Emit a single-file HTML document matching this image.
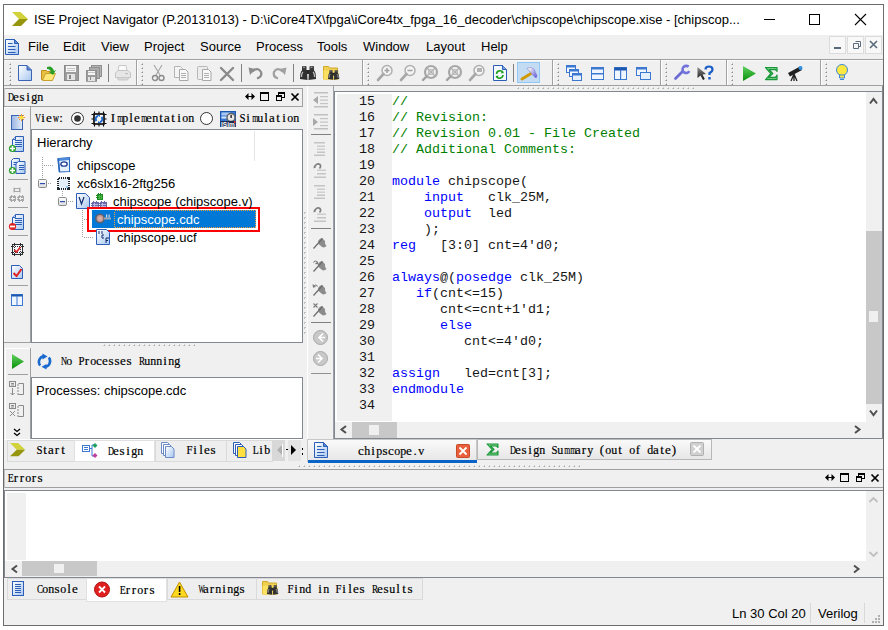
<!DOCTYPE html>
<html><head><meta charset="utf-8">
<style>
*{margin:0;padding:0;box-sizing:border-box}
body{width:888px;height:630px;background:#fff;position:relative;overflow:hidden;font-family:"Liberation Sans",sans-serif;font-size:13px;color:#000}
svg{position:absolute;left:0;top:0}
.t{position:absolute;white-space:pre}
.ui{font-family:"Liberation Sans",sans-serif;font-size:13px;line-height:16px}
.ss{font-family:"Liberation Serif",serif;font-size:13px;line-height:14px;-webkit-text-stroke:0.2px #000}
.ss i{font-style:normal;display:inline-block;width:6px;text-align:center}
.code{font-family:"Liberation Mono",monospace;font-size:13.33px;line-height:16px;color:#161616}
.kw{color:#0000ff}
.cm{color:#008000}
</style></head><body>
<svg width="888" height="630" viewBox="0 0 888 630" shape-rendering="auto"><defs>
<linearGradient id="gdoc" x1="0" y1="0" x2="1" y2="1"><stop offset="0" stop-color="#ffffff"/><stop offset="1" stop-color="#a8c8f0"/></linearGradient>
<linearGradient id="gexp" x1="0" y1="0" x2="0" y2="1"><stop offset="0" stop-color="#ffffff"/><stop offset="1" stop-color="#dcdcdc"/></linearGradient><linearGradient id="gtab" x1="0" y1="0" x2="0" y2="1"><stop offset="0" stop-color="#fafafa"/><stop offset="1" stop-color="#e6e6e6"/></linearGradient></defs>
<rect x="0" y="0" width="888" height="630" fill="#fff" />
<rect x="3" y="4" width="881" height="622" fill="#6c6c6c" />
<rect x="4" y="5" width="879" height="620" fill="#f0f0f0" />
<rect x="4" y="5" width="879" height="30" fill="#fff" />
<g transform="translate(12,12) scale(1.0)"><polygon points="0,0 8.5,0 16,7 7,7" fill="#d2d23c"/><polygon points="7,7 16,7 9,14 0,14" fill="#96960c"/></g>
<rect x="764" y="19" width="11" height="1" fill="#000" />
<rect x="809.5" y="14.5" width="10" height="10" fill="none" stroke="#000" stroke-width="1"/>
<path d="M855,14 L866,25 M866,14 L855,25" stroke="#000" stroke-width="1.1"/>
<g transform="translate(5,39)"><path d="M0.5,0.5 H9.5 L13.5,4.5 V15.5 H0.5 Z" fill="url(#gdoc)" stroke="#2c5eb8"/><path d="M9.5,0.5 V4.5 H13.5 Z" fill="#5a8ad8" stroke="#2c5eb8"/><path d="M3,4.5 H7.5 M3,7.5 H10.5 M3,10.5 H10.5 M3,13.5 H10.5" stroke="#2c5eb8" stroke-width="1.2"/></g>
<rect x="829" y="36" width="17" height="18" fill="#f8f8f8" />
<rect x="829" y="36" width="17" height="1" fill="#dcdcdc" />
<rect x="829" y="53" width="17" height="1" fill="#dcdcdc" />
<rect x="829" y="36" width="1" height="18" fill="#dcdcdc" />
<rect x="845" y="36" width="1" height="18" fill="#dcdcdc" />
<rect x="847" y="36" width="17" height="18" fill="#f8f8f8" />
<rect x="847" y="36" width="17" height="1" fill="#dcdcdc" />
<rect x="847" y="53" width="17" height="1" fill="#dcdcdc" />
<rect x="847" y="36" width="1" height="18" fill="#dcdcdc" />
<rect x="863" y="36" width="1" height="18" fill="#dcdcdc" />
<rect x="865" y="36" width="17" height="18" fill="#f8f8f8" />
<rect x="865" y="36" width="17" height="1" fill="#dcdcdc" />
<rect x="865" y="53" width="17" height="1" fill="#dcdcdc" />
<rect x="865" y="36" width="1" height="18" fill="#dcdcdc" />
<rect x="881" y="36" width="1" height="18" fill="#dcdcdc" />
<rect x="834" y="47" width="7" height="2" fill="#5a6a7a"/>
<path d="M853.5,43.5 h5 v5 h-5 z M855.5,41.5 h5 v5 h-2" fill="none" stroke="#5a6a7a"/>
<path d="M870,41 l7,7 M877,41 l-7,7" stroke="#5a6a7a" stroke-width="1.6"/>
<rect x="4" y="59" width="879" height="1" fill="#a0a0a0" />
<rect x="4" y="85" width="879" height="1" fill="#a0a0a0" />
<rect x="5" y="60" width="878" height="1" fill="#fafafa" />
<rect x="136" y="60" width="1" height="25" fill="#a0a0a0" />
<rect x="137" y="60" width="1" height="25" fill="#fff" />
<rect x="362" y="60" width="1" height="25" fill="#a0a0a0" />
<rect x="363" y="60" width="1" height="25" fill="#fff" />
<rect x="552" y="60" width="1" height="25" fill="#a0a0a0" />
<rect x="553" y="60" width="1" height="25" fill="#fff" />
<rect x="660" y="60" width="1" height="25" fill="#a0a0a0" />
<rect x="661" y="60" width="1" height="25" fill="#fff" />
<rect x="726" y="60" width="1" height="25" fill="#a0a0a0" />
<rect x="727" y="60" width="1" height="25" fill="#fff" />
<rect x="820" y="60" width="1" height="25" fill="#a0a0a0" />
<rect x="821" y="60" width="1" height="25" fill="#fff" />
<rect x="9" y="63" width="2" height="2" fill="#c4c4c4" />
<rect x="9" y="63" width="1" height="1" fill="#fafafa" />
<rect x="10" y="64" width="1" height="1" fill="#8c8c8c" />
<rect x="9" y="67" width="2" height="2" fill="#c4c4c4" />
<rect x="9" y="67" width="1" height="1" fill="#fafafa" />
<rect x="10" y="68" width="1" height="1" fill="#8c8c8c" />
<rect x="9" y="71" width="2" height="2" fill="#c4c4c4" />
<rect x="9" y="71" width="1" height="1" fill="#fafafa" />
<rect x="10" y="72" width="1" height="1" fill="#8c8c8c" />
<rect x="9" y="75" width="2" height="2" fill="#c4c4c4" />
<rect x="9" y="75" width="1" height="1" fill="#fafafa" />
<rect x="10" y="76" width="1" height="1" fill="#8c8c8c" />
<rect x="9" y="79" width="2" height="2" fill="#c4c4c4" />
<rect x="9" y="79" width="1" height="1" fill="#fafafa" />
<rect x="10" y="80" width="1" height="1" fill="#8c8c8c" />
<rect x="9" y="83" width="2" height="2" fill="#c4c4c4" />
<rect x="9" y="83" width="1" height="1" fill="#fafafa" />
<rect x="10" y="84" width="1" height="1" fill="#8c8c8c" />
<rect x="141" y="63" width="2" height="2" fill="#c4c4c4" />
<rect x="141" y="63" width="1" height="1" fill="#fafafa" />
<rect x="142" y="64" width="1" height="1" fill="#8c8c8c" />
<rect x="141" y="67" width="2" height="2" fill="#c4c4c4" />
<rect x="141" y="67" width="1" height="1" fill="#fafafa" />
<rect x="142" y="68" width="1" height="1" fill="#8c8c8c" />
<rect x="141" y="71" width="2" height="2" fill="#c4c4c4" />
<rect x="141" y="71" width="1" height="1" fill="#fafafa" />
<rect x="142" y="72" width="1" height="1" fill="#8c8c8c" />
<rect x="141" y="75" width="2" height="2" fill="#c4c4c4" />
<rect x="141" y="75" width="1" height="1" fill="#fafafa" />
<rect x="142" y="76" width="1" height="1" fill="#8c8c8c" />
<rect x="141" y="79" width="2" height="2" fill="#c4c4c4" />
<rect x="141" y="79" width="1" height="1" fill="#fafafa" />
<rect x="142" y="80" width="1" height="1" fill="#8c8c8c" />
<rect x="141" y="83" width="2" height="2" fill="#c4c4c4" />
<rect x="141" y="83" width="1" height="1" fill="#fafafa" />
<rect x="142" y="84" width="1" height="1" fill="#8c8c8c" />
<rect x="367" y="63" width="2" height="2" fill="#c4c4c4" />
<rect x="367" y="63" width="1" height="1" fill="#fafafa" />
<rect x="368" y="64" width="1" height="1" fill="#8c8c8c" />
<rect x="367" y="67" width="2" height="2" fill="#c4c4c4" />
<rect x="367" y="67" width="1" height="1" fill="#fafafa" />
<rect x="368" y="68" width="1" height="1" fill="#8c8c8c" />
<rect x="367" y="71" width="2" height="2" fill="#c4c4c4" />
<rect x="367" y="71" width="1" height="1" fill="#fafafa" />
<rect x="368" y="72" width="1" height="1" fill="#8c8c8c" />
<rect x="367" y="75" width="2" height="2" fill="#c4c4c4" />
<rect x="367" y="75" width="1" height="1" fill="#fafafa" />
<rect x="368" y="76" width="1" height="1" fill="#8c8c8c" />
<rect x="367" y="79" width="2" height="2" fill="#c4c4c4" />
<rect x="367" y="79" width="1" height="1" fill="#fafafa" />
<rect x="368" y="80" width="1" height="1" fill="#8c8c8c" />
<rect x="367" y="83" width="2" height="2" fill="#c4c4c4" />
<rect x="367" y="83" width="1" height="1" fill="#fafafa" />
<rect x="368" y="84" width="1" height="1" fill="#8c8c8c" />
<rect x="557" y="63" width="2" height="2" fill="#c4c4c4" />
<rect x="557" y="63" width="1" height="1" fill="#fafafa" />
<rect x="558" y="64" width="1" height="1" fill="#8c8c8c" />
<rect x="557" y="67" width="2" height="2" fill="#c4c4c4" />
<rect x="557" y="67" width="1" height="1" fill="#fafafa" />
<rect x="558" y="68" width="1" height="1" fill="#8c8c8c" />
<rect x="557" y="71" width="2" height="2" fill="#c4c4c4" />
<rect x="557" y="71" width="1" height="1" fill="#fafafa" />
<rect x="558" y="72" width="1" height="1" fill="#8c8c8c" />
<rect x="557" y="75" width="2" height="2" fill="#c4c4c4" />
<rect x="557" y="75" width="1" height="1" fill="#fafafa" />
<rect x="558" y="76" width="1" height="1" fill="#8c8c8c" />
<rect x="557" y="79" width="2" height="2" fill="#c4c4c4" />
<rect x="557" y="79" width="1" height="1" fill="#fafafa" />
<rect x="558" y="80" width="1" height="1" fill="#8c8c8c" />
<rect x="557" y="83" width="2" height="2" fill="#c4c4c4" />
<rect x="557" y="83" width="1" height="1" fill="#fafafa" />
<rect x="558" y="84" width="1" height="1" fill="#8c8c8c" />
<rect x="665" y="63" width="2" height="2" fill="#c4c4c4" />
<rect x="665" y="63" width="1" height="1" fill="#fafafa" />
<rect x="666" y="64" width="1" height="1" fill="#8c8c8c" />
<rect x="665" y="67" width="2" height="2" fill="#c4c4c4" />
<rect x="665" y="67" width="1" height="1" fill="#fafafa" />
<rect x="666" y="68" width="1" height="1" fill="#8c8c8c" />
<rect x="665" y="71" width="2" height="2" fill="#c4c4c4" />
<rect x="665" y="71" width="1" height="1" fill="#fafafa" />
<rect x="666" y="72" width="1" height="1" fill="#8c8c8c" />
<rect x="665" y="75" width="2" height="2" fill="#c4c4c4" />
<rect x="665" y="75" width="1" height="1" fill="#fafafa" />
<rect x="666" y="76" width="1" height="1" fill="#8c8c8c" />
<rect x="665" y="79" width="2" height="2" fill="#c4c4c4" />
<rect x="665" y="79" width="1" height="1" fill="#fafafa" />
<rect x="666" y="80" width="1" height="1" fill="#8c8c8c" />
<rect x="665" y="83" width="2" height="2" fill="#c4c4c4" />
<rect x="665" y="83" width="1" height="1" fill="#fafafa" />
<rect x="666" y="84" width="1" height="1" fill="#8c8c8c" />
<rect x="731" y="63" width="2" height="2" fill="#c4c4c4" />
<rect x="731" y="63" width="1" height="1" fill="#fafafa" />
<rect x="732" y="64" width="1" height="1" fill="#8c8c8c" />
<rect x="731" y="67" width="2" height="2" fill="#c4c4c4" />
<rect x="731" y="67" width="1" height="1" fill="#fafafa" />
<rect x="732" y="68" width="1" height="1" fill="#8c8c8c" />
<rect x="731" y="71" width="2" height="2" fill="#c4c4c4" />
<rect x="731" y="71" width="1" height="1" fill="#fafafa" />
<rect x="732" y="72" width="1" height="1" fill="#8c8c8c" />
<rect x="731" y="75" width="2" height="2" fill="#c4c4c4" />
<rect x="731" y="75" width="1" height="1" fill="#fafafa" />
<rect x="732" y="76" width="1" height="1" fill="#8c8c8c" />
<rect x="731" y="79" width="2" height="2" fill="#c4c4c4" />
<rect x="731" y="79" width="1" height="1" fill="#fafafa" />
<rect x="732" y="80" width="1" height="1" fill="#8c8c8c" />
<rect x="731" y="83" width="2" height="2" fill="#c4c4c4" />
<rect x="731" y="83" width="1" height="1" fill="#fafafa" />
<rect x="732" y="84" width="1" height="1" fill="#8c8c8c" />
<rect x="825" y="63" width="2" height="2" fill="#c4c4c4" />
<rect x="825" y="63" width="1" height="1" fill="#fafafa" />
<rect x="826" y="64" width="1" height="1" fill="#8c8c8c" />
<rect x="825" y="67" width="2" height="2" fill="#c4c4c4" />
<rect x="825" y="67" width="1" height="1" fill="#fafafa" />
<rect x="826" y="68" width="1" height="1" fill="#8c8c8c" />
<rect x="825" y="71" width="2" height="2" fill="#c4c4c4" />
<rect x="825" y="71" width="1" height="1" fill="#fafafa" />
<rect x="826" y="72" width="1" height="1" fill="#8c8c8c" />
<rect x="825" y="75" width="2" height="2" fill="#c4c4c4" />
<rect x="825" y="75" width="1" height="1" fill="#fafafa" />
<rect x="826" y="76" width="1" height="1" fill="#8c8c8c" />
<rect x="825" y="79" width="2" height="2" fill="#c4c4c4" />
<rect x="825" y="79" width="1" height="1" fill="#fafafa" />
<rect x="826" y="80" width="1" height="1" fill="#8c8c8c" />
<rect x="825" y="83" width="2" height="2" fill="#c4c4c4" />
<rect x="825" y="83" width="1" height="1" fill="#fafafa" />
<rect x="826" y="84" width="1" height="1" fill="#8c8c8c" />
<rect x="108" y="64" width="1" height="18" fill="#808080" />
<rect x="241" y="64" width="1" height="18" fill="#808080" />
<rect x="293" y="64" width="1" height="18" fill="#808080" />
<rect x="513" y="64" width="1" height="18" fill="#808080" />
<g transform="translate(18,65)"><path d="M0.5,0.5 H9 L13.5,5 V15.5 H0.5 Z" fill="url(#gdoc)" stroke="#3c64b4"/><path d="M9,0.5 V5 H13.5" fill="#5a82d2" stroke="#3c64b4"/></g>
<g transform="translate(41,65)"><path d="M0.5,5.5 h5 l1,1 h5 v8 h-11 z" fill="#e8c040" stroke="#c09020"/><path d="M1.5,15.5 l3,-7 h10 l-3,7 z" fill="#ffe878" stroke="#c8a030"/><path d="M6,2 q5,-2 7,4 l2,-1 -3,5 -4,-3 2,0 q-1,-3 -4,-3z" fill="#28a028"/></g>
<g transform="translate(64,65)" shape-rendering="crispEdges"><rect x="0" y="0" width="14" height="15" fill="#9c9c9c"/><rect x="0" y="0" width="14" height="15" fill="none" stroke="#8a8a8a"/><rect x="2" y="1" width="10" height="6" fill="#f6f6f6"/><rect x="3" y="3" width="8" height="1" fill="#c4c4c4"/><rect x="3" y="5" width="8" height="1" fill="#c4c4c4"/><rect x="3" y="9" width="8" height="6" fill="#e4e4e4"/><rect x="5" y="10" width="2" height="4" fill="#8a8a8a"/></g>
<g transform="translate(86,65)" shape-rendering="crispEdges"><rect x="5" y="0" width="10" height="11" fill="#b4b4b4" stroke="#909090"/><rect x="3" y="2" width="10" height="11" fill="#acacac" stroke="#909090"/></g>
<g transform="translate(86,70) scale(0.78,0.74)"><g transform="translate(0,0)" shape-rendering="crispEdges"><rect x="0" y="0" width="14" height="15" fill="#9c9c9c"/><rect x="0" y="0" width="14" height="15" fill="none" stroke="#8a8a8a"/><rect x="2" y="1" width="10" height="6" fill="#f6f6f6"/><rect x="3" y="3" width="8" height="1" fill="#c4c4c4"/><rect x="3" y="5" width="8" height="1" fill="#c4c4c4"/><rect x="3" y="9" width="8" height="6" fill="#e4e4e4"/><rect x="5" y="10" width="2" height="4" fill="#8a8a8a"/></g></g>
<g transform="translate(115,65)"><path d="M4,0.5 h7 l1,5.5 h-9 z" fill="#fafafa" stroke="#c8c8c8"/><path d="M0.5,8 l2.5,-2.5 h10 l2.5,2.5 v4.5 h-15 z" fill="#e6e6e6" stroke="#c4c4c4"/><path d="M2,12.5 h12 l-1.5,2.5 h-9 z" fill="#d8d8d8" stroke="#c8c8c8"/><rect x="10" y="8" width="3" height="1.2" fill="#c0c0c0"/></g>
<g transform="translate(152,65)" fill="none" stroke="#8c8c8c"><path d="M2,0 L8,10 M10,0 L4,10" stroke="#a8a8a8" stroke-width="1.2"/><circle cx="3" cy="13" r="2.5" stroke-width="1.4"/><circle cx="9.5" cy="13" r="2.5" stroke-width="1.4"/></g>
<g transform="translate(174,66)"><path d="M0.5,0.5 h6 l2,2 v9 h-8z" fill="#f4f4f4" stroke="#b4b4b4"/><path d="M5.5,3.5 h6 l2.5,2.5 v8.5 h-8.5z" fill="#f8f8f8" stroke="#a8a8a8"/><path d="M7,7.5 h5 M7,9.5 h5 M7,11.5 h5" stroke="#b0b0b0"/></g>
<g transform="translate(197,65)"><rect x="0.5" y="1.5" width="10" height="13" rx="1" fill="#ececec" stroke="#b8b8b8"/><path d="M5.5,4.5 h6 l2.5,2.5 v8.5 h-8.5z" fill="#f8f8f8" stroke="#a8a8a8"/><path d="M7,8.5 h5 M7,10.5 h5 M7,12.5 h5" stroke="#b0b0b0"/></g>
<path d="M221,68 L233,80 M233,68 L221,80" stroke="#8a8a8a" stroke-width="2.4" stroke-linecap="round"/>
<path d="M252,71.5 Q258,66.5 261,72 Q262.5,76.5 257,78.5" fill="none" stroke="#8c8c8c" stroke-width="2.3"/><path d="M248.5,67.5 L255.5,69 L250,75 Z" fill="#8c8c8c"/>
<path d="M283,71.5 Q277,66.5 274,72 Q272.5,76.5 278,78.5" fill="none" stroke="#a0a0a0" stroke-width="2.3"/><path d="M286.5,67.5 L279.5,69 L285,75 Z" fill="#a0a0a0"/>
<g transform="translate(300,66) scale(1.0)"><rect x="2" y="0" width="4.5" height="7" rx="1" fill="#3a3a3a"/><rect x="9.5" y="0" width="4.5" height="7" rx="1" fill="#3a3a3a"/><rect x="5" y="4" width="6" height="4" fill="#2a2a2a"/><path d="M0,13 Q0,5 2.5,4 H7 L7.5,14 Z M16,13 Q16,5 13.5,4 H9 L8.5,14 Z" fill="#303030"/><path d="M1.5,11 Q1.5,7 3,6 M14.5,11 Q14.5,7 13,6" stroke="#c0c0c0" stroke-width="1.2" fill="none"/><rect x="3" y="0.5" width="2" height="1.5" fill="#909090"/><rect x="10.5" y="0.5" width="2" height="1.5" fill="#909090"/></g>
<g transform="translate(323,65)"><path d="M0.5,1.5 h5 l1,1.5 h8 v11 h-14z" fill="#f0d050" stroke="#d0a828"/><path d="M0.5,5.5 h15 v9 h-15z" fill="#fce060"/></g>
<g transform="translate(328,70) scale(0.7)"><rect x="2" y="0" width="4.5" height="7" rx="1" fill="#3a3a3a"/><rect x="9.5" y="0" width="4.5" height="7" rx="1" fill="#3a3a3a"/><rect x="5" y="4" width="6" height="4" fill="#2a2a2a"/><path d="M0,13 Q0,5 2.5,4 H7 L7.5,14 Z M16,13 Q16,5 13.5,4 H9 L8.5,14 Z" fill="#303030"/><path d="M1.5,11 Q1.5,7 3,6 M14.5,11 Q14.5,7 13,6" stroke="#c0c0c0" stroke-width="1.2" fill="none"/><rect x="3" y="0.5" width="2" height="1.5" fill="#909090"/><rect x="10.5" y="0.5" width="2" height="1.5" fill="#909090"/></g>
<g transform="translate(377,65)"><circle cx="10" cy="5.5" r="5" fill="#f4f4f4" stroke="#b0b0b0" stroke-width="1.5"/><path d="M6.5,9 L1,15" stroke="#a8a8a8" stroke-width="2.6" stroke-linecap="round"/><path d="M7.5,5.5 h5 M10,3 v5" stroke="#a0a0a0" stroke-width="1.5"/></g>
<g transform="translate(400,65)"><circle cx="10" cy="5.5" r="5" fill="#f4f4f4" stroke="#b0b0b0" stroke-width="1.5"/><path d="M6.5,9 L1,15" stroke="#a8a8a8" stroke-width="2.6" stroke-linecap="round"/><path d="M7.5,5.5 h5" stroke="#a0a0a0" stroke-width="1.5"/></g>
<g transform="translate(422,65)"><circle cx="9" cy="7" r="6" fill="none" stroke="#a8a8a8" stroke-width="2.2"/><circle cx="9" cy="7" r="2.5" fill="#f4f4f4" stroke="#b4b4b4"/><path d="M5,3 l8,8 M13,3 l-8,8" stroke="#b0b0b0" stroke-width="1.2"/><path d="M4,12 L1,15" stroke="#a0a0a0" stroke-width="2.4" stroke-linecap="round"/></g>
<g transform="translate(446,65)"><circle cx="9" cy="7" r="6" fill="none" stroke="#a8a8a8" stroke-width="2.2"/><circle cx="9" cy="7" r="2.5" fill="#f4f4f4" stroke="#b4b4b4"/><path d="M5,3 l8,8 M13,3 l-8,8" stroke="#b0b0b0" stroke-width="1.2"/><path d="M4,12 L1,15" stroke="#a0a0a0" stroke-width="2.4" stroke-linecap="round"/></g>
<g transform="translate(469,65)"><circle cx="10" cy="5.5" r="5" fill="#f4f4f4" stroke="#b0b0b0" stroke-width="1.5"/><path d="M6.5,9 L1,15" stroke="#a8a8a8" stroke-width="2.6" stroke-linecap="round"/><rect x="8" y="3" width="5" height="4" fill="#b4b4b4"/></g>
<g transform="translate(493,65)"><path d="M0.5,0.5 h9 l4,4 v11 h-13z" fill="#f4f8ff" stroke="#2c5eb8"/><path d="M9.5,0.5 v4 h4" fill="#7ea0e0" stroke="#2c5eb8"/><path d="M3.5,9 a3.5,3.5 0 0 1 6.5,-1.5 M10,10 a3.5,3.5 0 0 1 -6.5,1.5" fill="none" stroke="#20a020" stroke-width="1.6"/><path d="M9,5.5 l2,2.5 l-3,0.5z M4.5,13.5 l-2,-2.5 l3,-0.5z" fill="#20a020"/></g>
<rect x="517.5" y="62.5" width="22" height="20" fill="#c4dcf2" stroke="#90c8f8"/>
<defs><linearGradient id="ghead" x1="0" y1="0" x2="1" y2="1"><stop offset="0.2" stop-color="#eeeeee"/><stop offset="1" stop-color="#5a50d8"/></linearGradient></defs>
<path d="M522,79 L531,73.5" stroke="#d09a00" stroke-width="3" stroke-linecap="round"/>
<path d="M527,68.2 Q530.5,66.2 534,69 L537,75.5 Q537.2,78.3 535,77.5 L530.5,72.5 Q528.5,70.5 527,68.2 Z" fill="url(#ghead)" stroke="#8080e0" stroke-width="0.6"/>
<g transform="translate(566,65)"><rect x="0.5" y="0.5" width="9" height="7" fill="#f0f6ff" stroke="#3c78d0"/><rect x="0.5" y="0.5" width="9" height="2" fill="#3c78d0"/><rect x="3.5" y="4.5" width="9" height="7" fill="#f0f6ff" stroke="#3c78d0"/><rect x="3.5" y="4.5" width="9" height="2" fill="#3c78d0"/><rect x="6.5" y="8.5" width="9" height="7" fill="#e4efff" stroke="#3c78d0"/><rect x="6.5" y="8.5" width="9" height="2" fill="#3c78d0"/></g>
<g transform="translate(591,67)"><rect x="0.5" y="0.5" width="12" height="12" fill="#f0f6ff" stroke="#3c78d0"/><rect x="0.5" y="0.5" width="12" height="2" fill="#3c78d0"/><rect x="0.5" y="6" width="12" height="1.5" fill="#3c78d0"/></g>
<g transform="translate(614,67)"><rect x="0.5" y="0.5" width="12" height="12" fill="#f0f6ff" stroke="#3c78d0"/><rect x="0.5" y="0.5" width="12" height="3" fill="#1c58b0"/><rect x="6" y="3" width="1.2" height="9" fill="#3c78d0"/></g>
<g transform="translate(636,67)"><rect x="0.5" y="0.5" width="10" height="8" fill="#f0f6ff" stroke="#3c78d0"/><rect x="0.5" y="0.5" width="10" height="2" fill="#3c78d0"/><rect x="4.5" y="5.5" width="10" height="7" fill="#e4efff" stroke="#3c78d0"/></g>
<path d="M675.5,78.5 L682.5,71.5" stroke="#6c6cd4" stroke-width="2.8" stroke-linecap="round"/><path d="M688.6,66.8 A3.6,3.6 0 1 0 689.3,71.2" fill="none" stroke="#7272dc" stroke-width="2.6"/>
<defs><linearGradient id="garr" x1="0" y1="0" x2="0" y2="1"><stop offset="0" stop-color="#909090"/><stop offset="1" stop-color="#101010"/></linearGradient></defs>
<path d="M697.5,67 L697.5,78 L700.5,75.5 L703,80 L704.8,79 L702.5,74.5 L706,74 Z" fill="url(#garr)"/>
<path d="M705.5,69.5 Q705.5,66.5 709,66.5 Q712.5,66.5 712.5,69.5 Q712.5,71.5 709.5,73 V75" fill="none" stroke="#1a5ec8" stroke-width="2.2"/><rect x="708.3" y="77" width="2.4" height="2.5" fill="#1a5ec8"/>
<path d="M743,66 L756,73.5 L743,81 Z" fill="url(#grun)"/>
<polygon transform="translate(765.5,67.5) scale(1.05,1.1)" points="0,0 11,0 11,3.5 9.5,2 3.5,2 7,5.5 3,9 9.5,9 11,7 11,11 0,11 5,5.5" fill="#70c880" stroke="#189838" stroke-width="1.1" stroke-linejoin="round"/>
<g transform="translate(786,65)"><path d="M2,8 L14,1.5 L16,5 L4,11.5z" fill="#202020"/><circle cx="14.5" cy="3" r="2" fill="#3090e0"/><path d="M8,9 L5,16 M8,9 L11,16 M8,9 V16" stroke="#202020" stroke-width="1.3"/></g>
<g transform="translate(836,64)"><circle cx="6" cy="6" r="5.5" fill="#ffe840" stroke="#3a8ad8"/><path d="M3.5,11 h5 v3 h-5z" fill="#ffe840" stroke="#3a8ad8"/><path d="M4,15.5 h4" stroke="#3a8ad8"/></g>
<rect x="4" y="88" width="299" height="1" fill="#a0a0a0" />
<rect x="4" y="88" width="1" height="19" fill="#c8c8c8" />
<rect x="4" y="106" width="299" height="1" fill="#a0a0a0" />
<rect x="302" y="88" width="1" height="19" fill="#a0a0a0" />
<g transform="translate(0,0)"><path d="M246,96.5 H254" stroke="#000" stroke-width="1"/><path d="M245,96.5 L248.5,93 V100 Z M255,96.5 L251.5,93 V100 Z" fill="#000"/><rect x="260.5" y="92.5" width="8" height="8" fill="none" stroke="#000" shape-rendering="crispEdges"/><rect x="260" y="92" width="9" height="2" fill="#000"/><rect x="276.5" y="95.5" width="5" height="5" fill="none" stroke="#000" shape-rendering="crispEdges"/><rect x="276" y="95" width="6" height="2" fill="#000"/><path d="M278.5,95 V92.5 H284.5 V97.5 H282" fill="none" stroke="#000" shape-rendering="crispEdges"/><rect x="278" y="92" width="7" height="2" fill="#000"/><path d="M291.5,93.5 L298.5,100.5 M298.5,93.5 L291.5,100.5" stroke="#000" stroke-width="1.7"/></g>
<rect x="4" y="107" width="1" height="235" fill="#fafafa" />
<rect x="5" y="107" width="25" height="1" fill="#fff" />
<rect x="4" y="342" width="27" height="1" fill="#a0a0a0" />
<rect x="5" y="348" width="25" height="1" fill="#fff" />
<rect x="5" y="348" width="1" height="91" fill="#fff" />
<rect x="30" y="107" width="1" height="236" fill="#a0a0a0" />
<rect x="30" y="348" width="1" height="91" fill="#a0a0a0" />
<rect x="8" y="179" width="20" height="1" fill="#a0a0a0" />
<rect x="8" y="207" width="20" height="1" fill="#a0a0a0" />
<rect x="8" y="235" width="20" height="1" fill="#a0a0a0" />
<rect x="8" y="285" width="20" height="1" fill="#a0a0a0" />
<rect x="8" y="374" width="20" height="1" fill="#a0a0a0" />
<defs><linearGradient id="gnp" x1="0" y1="0" x2="1" y2="0"><stop offset="0" stop-color="#98b4e0"/><stop offset="1" stop-color="#e4eefc"/></linearGradient></defs>
<g transform="translate(11,115)"><rect x="0.5" y="0.5" width="11" height="14" fill="url(#gnp)" stroke="#3c64b4"/><path d="M10.5,-1 v7 M7,2.5 h7 M8,0 l5,5 M13,0 l-5,5" stroke="#ff9020" stroke-width="1"/><circle cx="10.5" cy="2.5" r="2" fill="#ffe040"/></g>
<g transform="translate(9,136)"><path d="M6.5,0.5 h8 v15 h-11 v-12 z" fill="url(#gdoc)" stroke="#2c5eb8"/><path d="M3.5,3.5 h3 v-3" fill="#c0d4f0" stroke="#2c5eb8"/><path d="M6,4.5 h7 M6,6.5 h7 M6,8.5 h7 M6,10.5 h7" stroke="#2c5eb8" stroke-width="1.1"/><circle cx="3.5" cy="12.5" r="3.6" fill="#2ca02c"/><path d="M3.5,10 v5 M1,12.5 h5" stroke="#fff" stroke-width="1.6"/></g>
<g transform="translate(9,158)"><path d="M4.5,0.5 h6 v11 h-8 v-9 z" fill="url(#gdoc)" stroke="#2c5eb8"/><path d="M4.5,4.5 h4 M4.5,6.5 h4" stroke="#2c5eb8"/><path d="M9.5,3.5 h6.5 v12 h-9 v-10 z" fill="url(#gdoc)" stroke="#2c5eb8"/><path d="M10,7.5 h5 M10,9.5 h5 M10,11.5 h5" stroke="#2c5eb8"/><circle cx="3.5" cy="12.5" r="3.6" fill="#2ca02c"/><path d="M3.5,10 v5 M1,12.5 h5" stroke="#fff" stroke-width="1.6"/></g>
<g transform="translate(9,187)" fill="none" stroke="#a8a8a8"><rect x="5.5" y="1.5" width="5" height="3"/><path d="M5,0.5 v5 M11,0.5 v5"/><rect x="1.5" y="9.5" width="5" height="4"/><rect x="9.5" y="9.5" width="5" height="4"/><path d="M0,10.5 h8 M0,12.5 h8 M8,10.5 h8 M8,12.5 h8 M2.5,8 v7 M5.5,8 v7 M10.5,8 v7 M13.5,8 v7" stroke-dasharray="1 1"/></g>
<g transform="translate(9,214)"><path d="M6.5,0.5 h8 v15 h-11 v-12 z" fill="url(#gdoc)" stroke="#2c5eb8"/><path d="M3.5,3.5 h3 v-3" fill="#c0d4f0" stroke="#2c5eb8"/><path d="M6,4.5 h7 M6,6.5 h7 M6,8.5 h7 M6,10.5 h7" stroke="#2c5eb8" stroke-width="1.1"/><circle cx="3.5" cy="12.5" r="3.6" fill="#e02020"/><path d="M1,12.5 h5" stroke="#fff" stroke-width="1.8"/></g>
<g transform="translate(11,243)"><rect x="1.5" y="1.5" width="10" height="10" fill="#f4f8ff" stroke="#303030"/><path d="M0,3.5 h13 M0,9.5 h13 M3.5,0 v13 M9.5,0 v13" stroke="#303030" stroke-dasharray="1 1"/><path d="M3.5,7 l2,2 l4,-5" fill="none" stroke="#e02020" stroke-width="1.6"/></g>
<g transform="translate(11,265)"><path d="M0.5,0.5 h8 l3,3 v10 h-11z" fill="url(#gdoc)" stroke="#2c5eb8"/><path d="M2.5,8 l3,3 l5,-7" fill="none" stroke="#e02020" stroke-width="2"/></g>
<g transform="translate(11,294)"><rect x="0.5" y="0.5" width="11" height="11" fill="#f0f6ff" stroke="#3c78d0"/><rect x="0.5" y="0.5" width="11" height="2" fill="#1c58b0"/><rect x="5.5" y="2" width="1" height="10" fill="#3c78d0"/></g>
<circle cx="77.5" cy="118.5" r="6" fill="#fff" stroke="#333" stroke-width="1"/><circle cx="77.5" cy="118.5" r="3.3" fill="#333"/>
<g transform="translate(91,111)"><rect x="3" y="3" width="10" height="10" fill="#f8f4f0" stroke="#000" stroke-width="1.6"/><path d="M3.5,0.5 v2 M8,0.5 v2 M12.5,0.5 v2 M3.5,13.5 v2 M8,13.5 v2 M12.5,13.5 v2 M0.5,3.5 h2 M0.5,8 h2 M0.5,12.5 h2 M13.5,3.5 h2 M13.5,8 h2 M13.5,12.5 h2" stroke="#000" stroke-width="1.1"/><path d="M5.5,10 a3,3 0 0 1 1.5,-5 M10.5,6 a3,3 0 0 1 -1.5,5" fill="none" stroke="#1a6ad0" stroke-width="2"/><path d="M6,4 h3 v2z M10,12 h-3 v-2z" fill="#1a6ad0"/></g>
<circle cx="206.5" cy="118.5" r="6" fill="#fff" stroke="#333" stroke-width="1"/>
<g transform="translate(220,111)"><rect x="0.5" y="0.5" width="15" height="15" fill="#3a78d0" stroke="#1a58b0"/><rect x="1.5" y="1.5" width="9" height="3" fill="#a8c8f0"/><rect x="1.5" y="5.5" width="6" height="2" fill="#d8e8ff"/><circle cx="11" cy="6.5" r="4" fill="#e8e8e8" stroke="#606060" stroke-width="1.4"/><rect x="10.5" y="4" width="1.2" height="3" fill="#000"/><rect x="0.5" y="10" width="15" height="6" fill="#1a2a50"/><text x="1" y="15.6" font-family="Liberation Sans" font-weight="bold" font-size="6.5" fill="#fff">ISim</text><rect x="14" y="10" width="1.5" height="2" fill="#e03030"/></g>
<rect x="31" y="129" width="272" height="214" fill="#fff" />
<rect x="31" y="129" width="272" height="1" fill="#828790" />
<rect x="31" y="342" width="272" height="1" fill="#828790" />
<rect x="31" y="129" width="1" height="214" fill="#828790" />
<rect x="302" y="129" width="1" height="214" fill="#828790" />
<rect x="254" y="131" width="1" height="30" fill="#e4e4e4" />
<rect x="42" y="157" width="1" height="1" fill="#a0a0a0" />
<rect x="42" y="159" width="1" height="1" fill="#a0a0a0" />
<rect x="42" y="161" width="1" height="1" fill="#a0a0a0" />
<rect x="42" y="163" width="1" height="1" fill="#a0a0a0" />
<rect x="42" y="165" width="1" height="1" fill="#a0a0a0" />
<rect x="42" y="167" width="1" height="1" fill="#a0a0a0" />
<rect x="42" y="169" width="1" height="1" fill="#a0a0a0" />
<rect x="42" y="171" width="1" height="1" fill="#a0a0a0" />
<rect x="42" y="173" width="1" height="1" fill="#a0a0a0" />
<rect x="42" y="175" width="1" height="1" fill="#a0a0a0" />
<rect x="42" y="177" width="1" height="1" fill="#a0a0a0" />
<rect x="42" y="179" width="1" height="1" fill="#a0a0a0" />
<rect x="44" y="165" width="1" height="1" fill="#a0a0a0" />
<rect x="46" y="165" width="1" height="1" fill="#a0a0a0" />
<rect x="48" y="165" width="1" height="1" fill="#a0a0a0" />
<rect x="50" y="165" width="1" height="1" fill="#a0a0a0" />
<rect x="52" y="165" width="1" height="1" fill="#a0a0a0" />
<rect x="48" y="183" width="1" height="1" fill="#a0a0a0" />
<rect x="50" y="183" width="1" height="1" fill="#a0a0a0" />
<rect x="62" y="191" width="1" height="1" fill="#a0a0a0" />
<rect x="62" y="193" width="1" height="1" fill="#a0a0a0" />
<rect x="62" y="195" width="1" height="1" fill="#a0a0a0" />
<rect x="68" y="201" width="1" height="1" fill="#a0a0a0" />
<rect x="70" y="201" width="1" height="1" fill="#a0a0a0" />
<rect x="72" y="201" width="1" height="1" fill="#a0a0a0" />
<rect x="82" y="210" width="1" height="1" fill="#a0a0a0" />
<rect x="82" y="212" width="1" height="1" fill="#a0a0a0" />
<rect x="82" y="214" width="1" height="1" fill="#a0a0a0" />
<rect x="82" y="216" width="1" height="1" fill="#a0a0a0" />
<rect x="82" y="218" width="1" height="1" fill="#a0a0a0" />
<rect x="82" y="220" width="1" height="1" fill="#a0a0a0" />
<rect x="82" y="222" width="1" height="1" fill="#a0a0a0" />
<rect x="82" y="224" width="1" height="1" fill="#a0a0a0" />
<rect x="82" y="226" width="1" height="1" fill="#a0a0a0" />
<rect x="82" y="228" width="1" height="1" fill="#a0a0a0" />
<rect x="82" y="230" width="1" height="1" fill="#a0a0a0" />
<rect x="82" y="232" width="1" height="1" fill="#a0a0a0" />
<rect x="82" y="234" width="1" height="1" fill="#a0a0a0" />
<rect x="82" y="236" width="1" height="1" fill="#a0a0a0" />
<rect x="84" y="219" width="1" height="1" fill="#a0a0a0" />
<rect x="86" y="219" width="1" height="1" fill="#a0a0a0" />
<rect x="88" y="219" width="1" height="1" fill="#a0a0a0" />
<rect x="90" y="219" width="1" height="1" fill="#a0a0a0" />
<rect x="92" y="219" width="1" height="1" fill="#a0a0a0" />
<rect x="84" y="237" width="1" height="1" fill="#a0a0a0" />
<rect x="86" y="237" width="1" height="1" fill="#a0a0a0" />
<rect x="88" y="237" width="1" height="1" fill="#a0a0a0" />
<rect x="90" y="237" width="1" height="1" fill="#a0a0a0" />
<rect x="92" y="237" width="1" height="1" fill="#a0a0a0" />
<rect x="38.5" y="179.5" width="8" height="8" rx="1.2" fill="url(#gexp)" stroke="#8a8a8a"/><rect x="40" y="183" width="5" height="1.2" fill="#3050b0"/>
<rect x="58.5" y="197.5" width="8" height="8" rx="1.2" fill="url(#gexp)" stroke="#8a8a8a"/><rect x="60" y="201" width="5" height="1.2" fill="#3050b0"/>
<g transform="translate(57,157)"><path d="M1,1.5 L12.5,0.5 L12.5,14.5 L2.5,15 Z" fill="#e8f0fc" stroke="#2a68c0" stroke-width="1.1"/><path d="M1,1.5 L12.5,0.5 L12,3 L1.5,4z" fill="#4a88d8"/><path d="M1.2,2 L2.5,15" stroke="#2a68c0" stroke-width="1.6"/><ellipse cx="7" cy="7" rx="3.2" ry="2.2" fill="#fff" stroke="#1a3a90" stroke-width="1.3"/></g>
<g transform="translate(57,177)" shape-rendering="crispEdges"><path d="M2,0 H13 V13 H0 V2 Z" fill="#202830"/><rect x="2" y="2" width="9" height="9" fill="#e4eef8"/><rect x="3" y="0" width="1" height="2" fill="#f4f4f4"/><rect x="3" y="11" width="1" height="2" fill="#f4f4f4"/><rect x="0" y="3" width="2" height="1" fill="#f4f4f4"/><rect x="11" y="3" width="2" height="1" fill="#f4f4f4"/><rect x="5" y="0" width="1" height="2" fill="#f4f4f4"/><rect x="5" y="11" width="1" height="2" fill="#f4f4f4"/><rect x="0" y="5" width="2" height="1" fill="#f4f4f4"/><rect x="11" y="5" width="2" height="1" fill="#f4f4f4"/><rect x="7" y="0" width="1" height="2" fill="#f4f4f4"/><rect x="7" y="11" width="1" height="2" fill="#f4f4f4"/><rect x="0" y="7" width="2" height="1" fill="#f4f4f4"/><rect x="11" y="7" width="2" height="1" fill="#f4f4f4"/><rect x="9" y="0" width="1" height="2" fill="#f4f4f4"/><rect x="9" y="11" width="1" height="2" fill="#f4f4f4"/><rect x="0" y="9" width="2" height="1" fill="#f4f4f4"/><rect x="11" y="9" width="2" height="1" fill="#f4f4f4"/><rect x="9" y="9" width="2" height="2" fill="#90c8f0"/></g>
<g transform="translate(76,193)"><path d="M0.5,0.5 h9 l4,4 v11 h-13z" fill="url(#gdoc)" stroke="#2c5eb8"/><path d="M3,4 l2.5,7 l2.5,-7" fill="none" stroke="#102a70" stroke-width="1.2"/></g>
<g transform="translate(91,193)" shape-rendering="crispEdges"><rect x="6" y="1" width="5" height="5" fill="#48b848" stroke="#208a20"/><path d="M5,2.5 h7 M5,4.5 h7 M7.5,0 v7 M9.5,0 v7" stroke="#208a20" stroke-dasharray="1 1"/><rect x="1" y="9" width="6" height="5" fill="#b8b8e0" stroke="#6a6aa8"/><path d="M0,10.5 h8 M0,12.5 h8 M2.5,8 v7 M5.5,8 v7" stroke="#6a6aa8" stroke-dasharray="1 1"/><rect x="9" y="9" width="6" height="5" fill="#b8b8e0" stroke="#6a6aa8"/><path d="M8,10.5 h8 M8,12.5 h8 M10.5,8 v7 M13.5,8 v7" stroke="#6a6aa8" stroke-dasharray="1 1"/></g>
<rect x="87" y="207" width="173" height="25" fill="#ff0000" />
<rect x="89" y="209" width="169" height="21" fill="#fff" />
<rect x="92" y="210" width="164" height="18" fill="#0078d7" />
<rect x="114.5" y="210.5" width="141" height="17" fill="none" stroke="#f0a040" stroke-dasharray="1 1" shape-rendering="crispEdges"/>
<g transform="translate(95,212)"><circle cx="5" cy="6.5" r="4.2" fill="#c49a98" stroke="#5a6270" stroke-width="1.6"/><circle cx="5" cy="6.5" r="2" fill="#d8b0a8"/><rect x="9" y="5.5" width="7" height="2" fill="#a0a8b8"/><rect x="11" y="2.5" width="1.2" height="3" fill="#d0d8e0"/><rect x="13.5" y="2.5" width="1.2" height="3" fill="#d0d8e0"/></g>
<g transform="translate(96,229)"><path d="M0.5,0.5 h10 l3,3 v12 h-13z" fill="url(#gdoc)" stroke="#2c5eb8"/><path d="M3,2 v3 M6,2 v3 M8,6 h-2 v3 h2 M10,9 h3 M10,9 v5 M10,11.5 h2" fill="none" stroke="#102a70" stroke-width="1"/></g>
<rect x="103" y="344" width="2" height="2" fill="#d0d0d0" />
<rect x="103" y="344" width="1" height="1" fill="#fafafa" />
<rect x="104" y="345" width="1" height="1" fill="#a8a8a8" />
<rect x="108" y="344" width="2" height="2" fill="#d0d0d0" />
<rect x="108" y="344" width="1" height="1" fill="#fafafa" />
<rect x="109" y="345" width="1" height="1" fill="#a8a8a8" />
<rect x="113" y="344" width="2" height="2" fill="#d0d0d0" />
<rect x="113" y="344" width="1" height="1" fill="#fafafa" />
<rect x="114" y="345" width="1" height="1" fill="#a8a8a8" />
<rect x="118" y="344" width="2" height="2" fill="#d0d0d0" />
<rect x="118" y="344" width="1" height="1" fill="#fafafa" />
<rect x="119" y="345" width="1" height="1" fill="#a8a8a8" />
<rect x="123" y="344" width="2" height="2" fill="#d0d0d0" />
<rect x="123" y="344" width="1" height="1" fill="#fafafa" />
<rect x="124" y="345" width="1" height="1" fill="#a8a8a8" />
<rect x="128" y="344" width="2" height="2" fill="#d0d0d0" />
<rect x="128" y="344" width="1" height="1" fill="#fafafa" />
<rect x="129" y="345" width="1" height="1" fill="#a8a8a8" />
<rect x="133" y="344" width="2" height="2" fill="#d0d0d0" />
<rect x="133" y="344" width="1" height="1" fill="#fafafa" />
<rect x="134" y="345" width="1" height="1" fill="#a8a8a8" />
<rect x="138" y="344" width="2" height="2" fill="#d0d0d0" />
<rect x="138" y="344" width="1" height="1" fill="#fafafa" />
<rect x="139" y="345" width="1" height="1" fill="#a8a8a8" />
<rect x="143" y="344" width="2" height="2" fill="#d0d0d0" />
<rect x="143" y="344" width="1" height="1" fill="#fafafa" />
<rect x="144" y="345" width="1" height="1" fill="#a8a8a8" />
<rect x="148" y="344" width="2" height="2" fill="#d0d0d0" />
<rect x="148" y="344" width="1" height="1" fill="#fafafa" />
<rect x="149" y="345" width="1" height="1" fill="#a8a8a8" />
<rect x="153" y="344" width="2" height="2" fill="#d0d0d0" />
<rect x="153" y="344" width="1" height="1" fill="#fafafa" />
<rect x="154" y="345" width="1" height="1" fill="#a8a8a8" />
<rect x="158" y="344" width="2" height="2" fill="#d0d0d0" />
<rect x="158" y="344" width="1" height="1" fill="#fafafa" />
<rect x="159" y="345" width="1" height="1" fill="#a8a8a8" />
<rect x="163" y="344" width="2" height="2" fill="#d0d0d0" />
<rect x="163" y="344" width="1" height="1" fill="#fafafa" />
<rect x="164" y="345" width="1" height="1" fill="#a8a8a8" />
<rect x="168" y="344" width="2" height="2" fill="#d0d0d0" />
<rect x="168" y="344" width="1" height="1" fill="#fafafa" />
<rect x="169" y="345" width="1" height="1" fill="#a8a8a8" />
<rect x="173" y="344" width="2" height="2" fill="#d0d0d0" />
<rect x="173" y="344" width="1" height="1" fill="#fafafa" />
<rect x="174" y="345" width="1" height="1" fill="#a8a8a8" />
<rect x="178" y="344" width="2" height="2" fill="#d0d0d0" />
<rect x="178" y="344" width="1" height="1" fill="#fafafa" />
<rect x="179" y="345" width="1" height="1" fill="#a8a8a8" />
<rect x="183" y="344" width="2" height="2" fill="#d0d0d0" />
<rect x="183" y="344" width="1" height="1" fill="#fafafa" />
<rect x="184" y="345" width="1" height="1" fill="#a8a8a8" />
<rect x="188" y="344" width="2" height="2" fill="#d0d0d0" />
<rect x="188" y="344" width="1" height="1" fill="#fafafa" />
<rect x="189" y="345" width="1" height="1" fill="#a8a8a8" />
<rect x="193" y="344" width="2" height="2" fill="#d0d0d0" />
<rect x="193" y="344" width="1" height="1" fill="#fafafa" />
<rect x="194" y="345" width="1" height="1" fill="#a8a8a8" />
<rect x="304" y="212" width="2" height="2" fill="#c0c0c0" />
<rect x="305" y="213" width="1" height="1" fill="#fff" />
<rect x="304" y="217" width="2" height="2" fill="#c0c0c0" />
<rect x="305" y="218" width="1" height="1" fill="#fff" />
<rect x="304" y="222" width="2" height="2" fill="#c0c0c0" />
<rect x="305" y="223" width="1" height="1" fill="#fff" />
<rect x="304" y="227" width="2" height="2" fill="#c0c0c0" />
<rect x="305" y="228" width="1" height="1" fill="#fff" />
<rect x="304" y="232" width="2" height="2" fill="#c0c0c0" />
<rect x="305" y="233" width="1" height="1" fill="#fff" />
<rect x="304" y="237" width="2" height="2" fill="#c0c0c0" />
<rect x="305" y="238" width="1" height="1" fill="#fff" />
<rect x="304" y="242" width="2" height="2" fill="#c0c0c0" />
<rect x="305" y="243" width="1" height="1" fill="#fff" />
<rect x="304" y="247" width="2" height="2" fill="#c0c0c0" />
<rect x="305" y="248" width="1" height="1" fill="#fff" />
<rect x="304" y="252" width="2" height="2" fill="#c0c0c0" />
<rect x="305" y="253" width="1" height="1" fill="#fff" />
<rect x="304" y="257" width="2" height="2" fill="#c0c0c0" />
<rect x="305" y="258" width="1" height="1" fill="#fff" />
<rect x="304" y="262" width="2" height="2" fill="#c0c0c0" />
<rect x="305" y="263" width="1" height="1" fill="#fff" />
<rect x="304" y="267" width="2" height="2" fill="#c0c0c0" />
<rect x="305" y="268" width="1" height="1" fill="#fff" />
<rect x="304" y="272" width="2" height="2" fill="#c0c0c0" />
<rect x="305" y="273" width="1" height="1" fill="#fff" />
<rect x="304" y="277" width="2" height="2" fill="#c0c0c0" />
<rect x="305" y="278" width="1" height="1" fill="#fff" />
<rect x="304" y="282" width="2" height="2" fill="#c0c0c0" />
<rect x="305" y="283" width="1" height="1" fill="#fff" />
<rect x="304" y="287" width="2" height="2" fill="#c0c0c0" />
<rect x="305" y="288" width="1" height="1" fill="#fff" />
<rect x="304" y="292" width="2" height="2" fill="#c0c0c0" />
<rect x="305" y="293" width="1" height="1" fill="#fff" />
<rect x="304" y="297" width="2" height="2" fill="#c0c0c0" />
<rect x="305" y="298" width="1" height="1" fill="#fff" />
<rect x="304" y="302" width="2" height="2" fill="#c0c0c0" />
<rect x="305" y="303" width="1" height="1" fill="#fff" />
<rect x="304" y="307" width="2" height="2" fill="#c0c0c0" />
<rect x="305" y="308" width="1" height="1" fill="#fff" />
<rect x="304" y="312" width="2" height="2" fill="#c0c0c0" />
<rect x="305" y="313" width="1" height="1" fill="#fff" />
<rect x="304" y="317" width="2" height="2" fill="#c0c0c0" />
<rect x="305" y="318" width="1" height="1" fill="#fff" />
<rect x="304" y="322" width="2" height="2" fill="#c0c0c0" />
<rect x="305" y="323" width="1" height="1" fill="#fff" />
<rect x="304" y="327" width="2" height="2" fill="#c0c0c0" />
<rect x="305" y="328" width="1" height="1" fill="#fff" />
<rect x="304" y="332" width="2" height="2" fill="#c0c0c0" />
<rect x="305" y="333" width="1" height="1" fill="#fff" />
<defs><linearGradient id="grun" x1="0" y1="0" x2="0" y2="1"><stop offset="0" stop-color="#60d060"/><stop offset="1" stop-color="#089008"/></linearGradient></defs><path d="M12,354 L24,361.5 L12,369 Z" fill="url(#grun)"/>
<g transform="translate(37,354)"><path d="M3.2,11.5 A5.8,5.8 0 0 1 6.5,2.2" fill="none" stroke="#1a6ad0" stroke-width="2.6"/><path d="M5.5,-0.5 L10.5,2.5 L5.5,5.5 Z" fill="#1a6ad0"/><path d="M11.8,3.5 A5.8,5.8 0 0 1 8.5,12.8" fill="none" stroke="#1a6ad0" stroke-width="2.6"/><path d="M9.5,10 L4.5,12.8 L9.5,15.5 Z" fill="#1a6ad0"/></g>
<rect x="31" y="377" width="272" height="62" fill="#fff" />
<rect x="31" y="377" width="272" height="1" fill="#828790" />
<rect x="31" y="438" width="272" height="1" fill="#828790" />
<rect x="31" y="377" width="1" height="62" fill="#828790" />
<rect x="302" y="377" width="1" height="62" fill="#828790" />
<g transform="translate(9,381)" fill="none" stroke="#8a8a8a"><rect x="0.5" y="0.5" width="6" height="5"/><path d="M2,2.5 h3 M2,4 h3"/><path d="M3.5,7 v7 M1.5,12 l2,2 l2,-2"/><path d="M9.5,2.5 h5 v11 h-5 M8,4 h2 M8,7 h2 M8,10 h2 M8,13 h2"/></g>
<g transform="translate(9,403)" fill="none" stroke="#8a8a8a"><rect x="0.5" y="0.5" width="6" height="5"/><path d="M2,2.5 h3 M2,4 h3"/><path d="M1,8 l5,5 M6,8 l-5,5"/><path d="M9.5,2.5 h5 v11 h-5 M8,4 h2 M8,7 h2 M8,10 h2 M8,13 h2"/></g>
<path d="M14,429 l3,2.5 l3,-2.5 M14,433 l3,2.5 l3,-2.5" fill="none" stroke="#000" stroke-width="1.3"/>
<rect x="4" y="439" width="299" height="1" fill="#fff" />
<rect x="7" y="440" width="68" height="22" fill="#eeeeee" />
<rect x="7" y="440" width="68" height="1" fill="#dadada" />
<rect x="7" y="461" width="68" height="1" fill="#dadada" />
<rect x="7" y="440" width="1" height="22" fill="#dadada" />
<rect x="74" y="440" width="1" height="22" fill="#dadada" />
<g transform="translate(10,443) scale(0.95)"><polygon points="0,0 8.5,0 16,7 7,7" fill="#d2d23c"/><polygon points="7,7 16,7 9,14 0,14" fill="#96960c"/></g>
<rect x="74" y="440" width="81" height="22" fill="#fff" />
<rect x="74" y="440" width="81" height="1" fill="#e0e0e0" />
<rect x="74" y="461" width="81" height="1" fill="#e0e0e0" />
<rect x="74" y="440" width="1" height="22" fill="#e0e0e0" />
<rect x="154" y="440" width="1" height="22" fill="#e0e0e0" />
<g transform="translate(82,443)"><rect x="0.5" y="2.5" width="7" height="6" fill="#fff" stroke="#3c78d0"/><path d="M2,4.5 h4 M2,6.5 h4" stroke="#3c78d0"/><path d="M8,5.5 h2 M10,2 v11 M10,2 h2 M10,13 h2" fill="none" stroke="#3c78d0"/><path d="M13,0 l2.5,2.5 l-2.5,2.5 l-2.5,-2.5z" fill="#20a060"/><path d="M13,10 l2.5,2.5 l-2.5,2.5 l-2.5,-2.5z" fill="#c040a0"/></g>
<rect x="155" y="440" width="72" height="22" fill="#eeeeee" />
<rect x="155" y="440" width="72" height="1" fill="#dadada" />
<rect x="155" y="461" width="72" height="1" fill="#dadada" />
<rect x="155" y="440" width="1" height="22" fill="#dadada" />
<rect x="226" y="440" width="1" height="22" fill="#dadada" />
<g transform="translate(161,442)"><path d="M0.5,0.5 h6 l2,2 v9 h-8z" fill="#fff" stroke="#6a8ac8"/><path d="M2.5,2.5 h6 l2,2 v9 h-8z" fill="#fff" stroke="#6a8ac8"/><path d="M4.5,4.5 h6 l2.5,2.5 v8.5 h-8.5z" fill="url(#gdoc)" stroke="#6a8ac8"/></g>
<rect x="226" y="440" width="1" height="22" fill="#e0e0e0" />
<rect x="226" y="440" width="47" height="22" fill="#eeeeee" />
<rect x="226" y="440" width="47" height="1" fill="#dadada" />
<rect x="226" y="461" width="47" height="1" fill="#dadada" />
<rect x="226" y="440" width="1" height="22" fill="#dadada" />
<rect x="272" y="440" width="1" height="22" fill="#dadada" />
<g transform="translate(233,442)"><path d="M0.5,0.5 h6 l2,2 v9 h-8z" fill="#fff" stroke="#2c5eb8"/><path d="M2.5,2.5 h6 l2,2 v9 h-8z" fill="#fff" stroke="#2c5eb8"/><path d="M4.5,4.5 h6 l2.5,2.5 v8.5 h-8.5z" fill="#ffe040" stroke="#2c5eb8"/></g>
<rect x="272" y="440" width="13" height="21" fill="#d8d8d8" />
<path d="M282,445 v10 l-5,-5z" fill="#b0b0b0"/>
<rect x="288" y="440" width="13" height="21" fill="#e4e4e4" />
<path d="M291,445 v10 l5,-5z" fill="#000"/>
<rect x="286" y="449" width="2" height="1" fill="#000" />
<rect x="302" y="448" width="1" height="2" fill="#000" />
<rect x="302" y="453" width="1" height="2" fill="#000" />
<rect x="282" y="444" width="1" height="13" fill="#fff" />
<rect x="307" y="86" width="1" height="353" fill="#fff" />
<rect x="333" y="86" width="1" height="353" fill="#9aa0a8" />
<g transform="translate(313,92)"><rect x="1" y="0" width="14" height="1.5" fill="#c0c0c0"/><path d="M5,4 L0,8 L5,12z" fill="#a8a8a8"/><rect x="7" y="4" width="8" height="1.2" fill="#c4c4c4"/><rect x="7" y="7.5" width="8" height="1.2" fill="#c4c4c4"/><rect x="7" y="11" width="8" height="1.2" fill="#c4c4c4"/><rect x="1" y="14" width="14" height="1.5" fill="#c0c0c0"/></g>
<g transform="translate(313,114)"><rect x="1" y="0" width="14" height="1.5" fill="#c0c0c0"/><path d="M0,4 L5,8 L0,12z" fill="#a8a8a8"/><rect x="7" y="4" width="8" height="1.2" fill="#c4c4c4"/><rect x="7" y="7.5" width="8" height="1.2" fill="#c4c4c4"/><rect x="7" y="11" width="8" height="1.2" fill="#c4c4c4"/><rect x="1" y="14" width="14" height="1.5" fill="#c0c0c0"/></g>
<rect x="311" y="134" width="20" height="1" fill="#808080" />
<g transform="translate(313,142)"><rect x="1" y="0" width="11" height="1.5" fill="#c4c4c4"/><rect x="4" y="3.5" width="8" height="1.5" fill="#cccccc"/><rect x="4" y="6.5" width="8" height="1.5" fill="#d0d0d0"/><rect x="4" y="9.5" width="8" height="1.5" fill="#c4c4c4"/><rect x="1" y="12.5" width="11" height="1.5" fill="#c4c4c4"/></g>
<g transform="translate(313,162)"><path d="M3,5.5 L1,3 L0.5,6.5 Z" fill="#808080"/><path d="M1.8,4.6 Q4,0.5 7,2.5 Q8.5,4.5 6.5,6.5" fill="none" stroke="#808080" stroke-width="1.6"/><rect x="4" y="7.5" width="9" height="1.5" fill="#cccccc"/><rect x="4" y="11" width="9" height="1.5" fill="#c4c4c4"/><rect x="1" y="14.5" width="12" height="1.5" fill="#c4c4c4"/></g>
<g transform="translate(313,185)"><rect x="1" y="0" width="11" height="1.5" fill="#c4c4c4"/><rect x="4" y="3.5" width="8" height="1.5" fill="#cccccc"/><rect x="4" y="6.5" width="8" height="1.5" fill="#d0d0d0"/><rect x="4" y="9.5" width="8" height="1.5" fill="#c4c4c4"/><rect x="1" y="12.5" width="11" height="1.5" fill="#c4c4c4"/></g>
<g transform="translate(313,206)"><path d="M3,5.5 L1,3 L0.5,6.5 Z" fill="#808080"/><path d="M1.8,4.6 Q4,0.5 7,2.5 Q8.5,4.5 6.5,6.5" fill="none" stroke="#808080" stroke-width="1.6"/><rect x="4" y="7.5" width="9" height="1.5" fill="#cccccc"/><rect x="4" y="11" width="9" height="1.5" fill="#c4c4c4"/><rect x="1" y="14.5" width="12" height="1.5" fill="#c4c4c4"/></g>
<rect x="311" y="228" width="20" height="1" fill="#808080" />
<g transform="translate(313,237)"><path d="M5,4 Q7,1 9,1 L12,4 Q11.5,7 13.5,9 Q11,11.5 8.5,9.5 L5.5,7 Z" fill="#8c8c8c"/><path d="M0.5,11.5 L9.5,1.5" stroke="#6c6c6c" stroke-width="1.2"/></g>
<g transform="translate(313,260)"><path d="M5,4 Q7,1 9,1 L12,4 Q11.5,7 13.5,9 Q11,11.5 8.5,9.5 L5.5,7 Z" fill="#8c8c8c"/><path d="M0.5,11.5 L9.5,1.5" stroke="#6c6c6c" stroke-width="1.2"/><path d="M0.5,2.5 q2,-3 4,0 M2.5,4 l2,-1.5 l0.5,2" fill="none" stroke="#7a7a7a" stroke-width="1.1"/></g>
<g transform="translate(313,284)"><path d="M5,4 Q7,1 9,1 L12,4 Q11.5,7 13.5,9 Q11,11.5 8.5,9.5 L5.5,7 Z" fill="#8c8c8c"/><path d="M0.5,11.5 L9.5,1.5" stroke="#6c6c6c" stroke-width="1.2"/><path d="M4.5,2.5 q-2,-3 -4,0 M0,0.5 l0.5,2.5 l2,-0.5" fill="none" stroke="#7a7a7a" stroke-width="1.1"/></g>
<g transform="translate(313,305)"><path d="M5,4 Q7,1 9,1 L12,4 Q11.5,7 13.5,9 Q11,11.5 8.5,9.5 L5.5,7 Z" fill="#8c8c8c"/><path d="M0.5,11.5 L9.5,1.5" stroke="#6c6c6c" stroke-width="1.2"/><path d="M0.5,-1.5 l4,4 M4.5,-1.5 l-4,4" stroke="#7a7a7a" stroke-width="1.1"/></g>
<rect x="311" y="322" width="20" height="1" fill="#808080" />
<circle cx="320.5" cy="337.5" r="7" fill="#c8c8c8" stroke="#a8a8a8"/><path d="M323,333.5 l-4,4 l4,4 M319,337.5 h6" fill="none" stroke="#fff" stroke-width="1.6"/>
<circle cx="320.5" cy="358.5" r="7" fill="#c8c8c8" stroke="#a8a8a8"/><path d="M318,354.5 l4,4 l-4,4 M322,358.5 h-6" fill="none" stroke="#fff" stroke-width="1.6"/>
<rect x="311" y="373" width="20" height="1" fill="#909090" />
<rect x="334" y="91" width="549" height="1" fill="#828790" />
<rect x="334" y="91" width="1" height="348" fill="#828790" />
<rect x="334" y="438" width="549" height="1" fill="#828790" />
<rect x="335" y="92" width="547" height="330" fill="#fff" />
<rect x="337" y="94" width="55" height="327" fill="#f0f0f0" />
<rect x="517" y="87" width="2" height="2" fill="#d0d0d0" />
<rect x="517" y="87" width="1" height="1" fill="#fafafa" />
<rect x="518" y="88" width="1" height="1" fill="#a8a8a8" />
<rect x="522" y="87" width="2" height="2" fill="#d0d0d0" />
<rect x="522" y="87" width="1" height="1" fill="#fafafa" />
<rect x="523" y="88" width="1" height="1" fill="#a8a8a8" />
<rect x="527" y="87" width="2" height="2" fill="#d0d0d0" />
<rect x="527" y="87" width="1" height="1" fill="#fafafa" />
<rect x="528" y="88" width="1" height="1" fill="#a8a8a8" />
<rect x="532" y="87" width="2" height="2" fill="#d0d0d0" />
<rect x="532" y="87" width="1" height="1" fill="#fafafa" />
<rect x="533" y="88" width="1" height="1" fill="#a8a8a8" />
<rect x="537" y="87" width="2" height="2" fill="#d0d0d0" />
<rect x="537" y="87" width="1" height="1" fill="#fafafa" />
<rect x="538" y="88" width="1" height="1" fill="#a8a8a8" />
<rect x="542" y="87" width="2" height="2" fill="#d0d0d0" />
<rect x="542" y="87" width="1" height="1" fill="#fafafa" />
<rect x="543" y="88" width="1" height="1" fill="#a8a8a8" />
<rect x="547" y="87" width="2" height="2" fill="#d0d0d0" />
<rect x="547" y="87" width="1" height="1" fill="#fafafa" />
<rect x="548" y="88" width="1" height="1" fill="#a8a8a8" />
<rect x="552" y="87" width="2" height="2" fill="#d0d0d0" />
<rect x="552" y="87" width="1" height="1" fill="#fafafa" />
<rect x="553" y="88" width="1" height="1" fill="#a8a8a8" />
<rect x="557" y="87" width="2" height="2" fill="#d0d0d0" />
<rect x="557" y="87" width="1" height="1" fill="#fafafa" />
<rect x="558" y="88" width="1" height="1" fill="#a8a8a8" />
<rect x="562" y="87" width="2" height="2" fill="#d0d0d0" />
<rect x="562" y="87" width="1" height="1" fill="#fafafa" />
<rect x="563" y="88" width="1" height="1" fill="#a8a8a8" />
<rect x="567" y="87" width="2" height="2" fill="#d0d0d0" />
<rect x="567" y="87" width="1" height="1" fill="#fafafa" />
<rect x="568" y="88" width="1" height="1" fill="#a8a8a8" />
<rect x="572" y="87" width="2" height="2" fill="#d0d0d0" />
<rect x="572" y="87" width="1" height="1" fill="#fafafa" />
<rect x="573" y="88" width="1" height="1" fill="#a8a8a8" />
<rect x="577" y="87" width="2" height="2" fill="#d0d0d0" />
<rect x="577" y="87" width="1" height="1" fill="#fafafa" />
<rect x="578" y="88" width="1" height="1" fill="#a8a8a8" />
<rect x="582" y="87" width="2" height="2" fill="#d0d0d0" />
<rect x="582" y="87" width="1" height="1" fill="#fafafa" />
<rect x="583" y="88" width="1" height="1" fill="#a8a8a8" />
<rect x="587" y="87" width="2" height="2" fill="#d0d0d0" />
<rect x="587" y="87" width="1" height="1" fill="#fafafa" />
<rect x="588" y="88" width="1" height="1" fill="#a8a8a8" />
<rect x="592" y="87" width="2" height="2" fill="#d0d0d0" />
<rect x="592" y="87" width="1" height="1" fill="#fafafa" />
<rect x="593" y="88" width="1" height="1" fill="#a8a8a8" />
<rect x="597" y="87" width="2" height="2" fill="#d0d0d0" />
<rect x="597" y="87" width="1" height="1" fill="#fafafa" />
<rect x="598" y="88" width="1" height="1" fill="#a8a8a8" />
<rect x="602" y="87" width="2" height="2" fill="#d0d0d0" />
<rect x="602" y="87" width="1" height="1" fill="#fafafa" />
<rect x="603" y="88" width="1" height="1" fill="#a8a8a8" />
<rect x="607" y="87" width="2" height="2" fill="#d0d0d0" />
<rect x="607" y="87" width="1" height="1" fill="#fafafa" />
<rect x="608" y="88" width="1" height="1" fill="#a8a8a8" />
<rect x="612" y="87" width="2" height="2" fill="#d0d0d0" />
<rect x="612" y="87" width="1" height="1" fill="#fafafa" />
<rect x="613" y="88" width="1" height="1" fill="#a8a8a8" />
<rect x="617" y="87" width="2" height="2" fill="#d0d0d0" />
<rect x="617" y="87" width="1" height="1" fill="#fafafa" />
<rect x="618" y="88" width="1" height="1" fill="#a8a8a8" />
<rect x="622" y="87" width="2" height="2" fill="#d0d0d0" />
<rect x="622" y="87" width="1" height="1" fill="#fafafa" />
<rect x="623" y="88" width="1" height="1" fill="#a8a8a8" />
<rect x="627" y="87" width="2" height="2" fill="#d0d0d0" />
<rect x="627" y="87" width="1" height="1" fill="#fafafa" />
<rect x="628" y="88" width="1" height="1" fill="#a8a8a8" />
<rect x="632" y="87" width="2" height="2" fill="#d0d0d0" />
<rect x="632" y="87" width="1" height="1" fill="#fafafa" />
<rect x="633" y="88" width="1" height="1" fill="#a8a8a8" />
<rect x="637" y="87" width="2" height="2" fill="#d0d0d0" />
<rect x="637" y="87" width="1" height="1" fill="#fafafa" />
<rect x="638" y="88" width="1" height="1" fill="#a8a8a8" />
<rect x="642" y="87" width="2" height="2" fill="#d0d0d0" />
<rect x="642" y="87" width="1" height="1" fill="#fafafa" />
<rect x="643" y="88" width="1" height="1" fill="#a8a8a8" />
<rect x="647" y="87" width="2" height="2" fill="#d0d0d0" />
<rect x="647" y="87" width="1" height="1" fill="#fafafa" />
<rect x="648" y="88" width="1" height="1" fill="#a8a8a8" />
<rect x="652" y="87" width="2" height="2" fill="#d0d0d0" />
<rect x="652" y="87" width="1" height="1" fill="#fafafa" />
<rect x="653" y="88" width="1" height="1" fill="#a8a8a8" />
<rect x="657" y="87" width="2" height="2" fill="#d0d0d0" />
<rect x="657" y="87" width="1" height="1" fill="#fafafa" />
<rect x="658" y="88" width="1" height="1" fill="#a8a8a8" />
<rect x="662" y="87" width="2" height="2" fill="#d0d0d0" />
<rect x="662" y="87" width="1" height="1" fill="#fafafa" />
<rect x="663" y="88" width="1" height="1" fill="#a8a8a8" />
<rect x="667" y="87" width="2" height="2" fill="#d0d0d0" />
<rect x="667" y="87" width="1" height="1" fill="#fafafa" />
<rect x="668" y="88" width="1" height="1" fill="#a8a8a8" />
<rect x="672" y="87" width="2" height="2" fill="#d0d0d0" />
<rect x="672" y="87" width="1" height="1" fill="#fafafa" />
<rect x="673" y="88" width="1" height="1" fill="#a8a8a8" />
<rect x="677" y="87" width="2" height="2" fill="#d0d0d0" />
<rect x="677" y="87" width="1" height="1" fill="#fafafa" />
<rect x="678" y="88" width="1" height="1" fill="#a8a8a8" />
<rect x="682" y="87" width="2" height="2" fill="#d0d0d0" />
<rect x="682" y="87" width="1" height="1" fill="#fafafa" />
<rect x="683" y="88" width="1" height="1" fill="#a8a8a8" />
<rect x="687" y="87" width="2" height="2" fill="#d0d0d0" />
<rect x="687" y="87" width="1" height="1" fill="#fafafa" />
<rect x="688" y="88" width="1" height="1" fill="#a8a8a8" />
<rect x="692" y="87" width="2" height="2" fill="#d0d0d0" />
<rect x="692" y="87" width="1" height="1" fill="#fafafa" />
<rect x="693" y="88" width="1" height="1" fill="#a8a8a8" />
<rect x="866" y="92" width="16" height="330" fill="#f0f0f0" />
<rect x="866" y="231" width="16" height="173" fill="#c8c8c8" />
<rect x="869" y="311" width="9" height="11" fill="#f0f0f0" />
<path d="M870,103.5 l3.5,-4.5 l3.5,4.5" fill="none" stroke="#505050" stroke-width="2"/>
<path d="M870,410.5 l3.5,4.5 l3.5,-4.5" fill="none" stroke="#505050" stroke-width="2"/>
<rect x="335" y="422" width="531" height="16" fill="#f0f0f0" />
<rect x="866" y="422" width="16" height="16" fill="#f0f0f0" />
<rect x="352" y="422" width="45" height="16" fill="#c8c8c8" />
<rect x="369" y="425" width="10" height="10" fill="#f0f0f0" />
<path d="M346,426 l-4.5,3.5 l4.5,3.5" fill="none" stroke="#505050" stroke-width="2"/>
<path d="M855,426 l4.5,3.5 l-4.5,3.5" fill="none" stroke="#505050" stroke-width="2"/>
<rect x="882" y="86" width="1" height="353" fill="#828790" />
<rect x="307.5" y="439.5" width="169" height="22" fill="url(#gtab)" stroke="#c8c8c8"/>
<rect x="308" y="460" width="169" height="3" fill="#0a64c8" />
<g transform="translate(314,442)"><path d="M0.5,0.5 H9.5 L13.5,4.5 V15.5 H0.5 Z" fill="url(#gdoc)" stroke="#2c5eb8"/><path d="M9.5,0.5 V4.5 H13.5 Z" fill="#5a8ad8" stroke="#2c5eb8"/><path d="M3,4.5 H7.5 M3,7.5 H10.5 M3,10.5 H10.5 M3,13.5 H10.5" stroke="#2c5eb8" stroke-width="1.2"/></g>
<rect x="456.5" y="444.5" width="13" height="13" rx="1" fill="#e8603c" stroke="#c84a28"/><path d="M459.5,447.5 l7,7 M466.5,447.5 l-7,7" stroke="#fff" stroke-width="1.8"/>
<rect x="477.5" y="439.5" width="234" height="20" fill="url(#gtab)" stroke="#b8b8b8"/>
<polygon transform="translate(487,444)" points="0,0 11,0 11,3.5 9.5,2 3.5,2 7,5.5 3,9 9.5,9 11,7 11,11 0,11 5,5.5" fill="#70c880" stroke="#189838" stroke-width="1.1" stroke-linejoin="round"/>
<rect x="690.5" y="442.5" width="13" height="13" rx="1" fill="#d0d0d0" stroke="#b0b0b0"/><path d="M693.5,445.5 l7,7 M700.5,445.5 l-7,7" stroke="#fff" stroke-width="1.8"/>
<rect x="298" y="465" width="2" height="2" fill="#d0d0d0" />
<rect x="298" y="465" width="1" height="1" fill="#fafafa" />
<rect x="299" y="466" width="1" height="1" fill="#a8a8a8" />
<rect x="303" y="465" width="2" height="2" fill="#d0d0d0" />
<rect x="303" y="465" width="1" height="1" fill="#fafafa" />
<rect x="304" y="466" width="1" height="1" fill="#a8a8a8" />
<rect x="308" y="465" width="2" height="2" fill="#d0d0d0" />
<rect x="308" y="465" width="1" height="1" fill="#fafafa" />
<rect x="309" y="466" width="1" height="1" fill="#a8a8a8" />
<rect x="313" y="465" width="2" height="2" fill="#d0d0d0" />
<rect x="313" y="465" width="1" height="1" fill="#fafafa" />
<rect x="314" y="466" width="1" height="1" fill="#a8a8a8" />
<rect x="318" y="465" width="2" height="2" fill="#d0d0d0" />
<rect x="318" y="465" width="1" height="1" fill="#fafafa" />
<rect x="319" y="466" width="1" height="1" fill="#a8a8a8" />
<rect x="323" y="465" width="2" height="2" fill="#d0d0d0" />
<rect x="323" y="465" width="1" height="1" fill="#fafafa" />
<rect x="324" y="466" width="1" height="1" fill="#a8a8a8" />
<rect x="328" y="465" width="2" height="2" fill="#d0d0d0" />
<rect x="328" y="465" width="1" height="1" fill="#fafafa" />
<rect x="329" y="466" width="1" height="1" fill="#a8a8a8" />
<rect x="333" y="465" width="2" height="2" fill="#d0d0d0" />
<rect x="333" y="465" width="1" height="1" fill="#fafafa" />
<rect x="334" y="466" width="1" height="1" fill="#a8a8a8" />
<rect x="338" y="465" width="2" height="2" fill="#d0d0d0" />
<rect x="338" y="465" width="1" height="1" fill="#fafafa" />
<rect x="339" y="466" width="1" height="1" fill="#a8a8a8" />
<rect x="343" y="465" width="2" height="2" fill="#d0d0d0" />
<rect x="343" y="465" width="1" height="1" fill="#fafafa" />
<rect x="344" y="466" width="1" height="1" fill="#a8a8a8" />
<rect x="348" y="465" width="2" height="2" fill="#d0d0d0" />
<rect x="348" y="465" width="1" height="1" fill="#fafafa" />
<rect x="349" y="466" width="1" height="1" fill="#a8a8a8" />
<rect x="353" y="465" width="2" height="2" fill="#d0d0d0" />
<rect x="353" y="465" width="1" height="1" fill="#fafafa" />
<rect x="354" y="466" width="1" height="1" fill="#a8a8a8" />
<rect x="358" y="465" width="2" height="2" fill="#d0d0d0" />
<rect x="358" y="465" width="1" height="1" fill="#fafafa" />
<rect x="359" y="466" width="1" height="1" fill="#a8a8a8" />
<rect x="363" y="465" width="2" height="2" fill="#d0d0d0" />
<rect x="363" y="465" width="1" height="1" fill="#fafafa" />
<rect x="364" y="466" width="1" height="1" fill="#a8a8a8" />
<rect x="368" y="465" width="2" height="2" fill="#d0d0d0" />
<rect x="368" y="465" width="1" height="1" fill="#fafafa" />
<rect x="369" y="466" width="1" height="1" fill="#a8a8a8" />
<rect x="373" y="465" width="2" height="2" fill="#d0d0d0" />
<rect x="373" y="465" width="1" height="1" fill="#fafafa" />
<rect x="374" y="466" width="1" height="1" fill="#a8a8a8" />
<rect x="378" y="465" width="2" height="2" fill="#d0d0d0" />
<rect x="378" y="465" width="1" height="1" fill="#fafafa" />
<rect x="379" y="466" width="1" height="1" fill="#a8a8a8" />
<rect x="383" y="465" width="2" height="2" fill="#d0d0d0" />
<rect x="383" y="465" width="1" height="1" fill="#fafafa" />
<rect x="384" y="466" width="1" height="1" fill="#a8a8a8" />
<rect x="388" y="465" width="2" height="2" fill="#d0d0d0" />
<rect x="388" y="465" width="1" height="1" fill="#fafafa" />
<rect x="389" y="466" width="1" height="1" fill="#a8a8a8" />
<rect x="393" y="465" width="2" height="2" fill="#d0d0d0" />
<rect x="393" y="465" width="1" height="1" fill="#fafafa" />
<rect x="394" y="466" width="1" height="1" fill="#a8a8a8" />
<rect x="398" y="465" width="2" height="2" fill="#d0d0d0" />
<rect x="398" y="465" width="1" height="1" fill="#fafafa" />
<rect x="399" y="466" width="1" height="1" fill="#a8a8a8" />
<rect x="403" y="465" width="2" height="2" fill="#d0d0d0" />
<rect x="403" y="465" width="1" height="1" fill="#fafafa" />
<rect x="404" y="466" width="1" height="1" fill="#a8a8a8" />
<rect x="408" y="465" width="2" height="2" fill="#d0d0d0" />
<rect x="408" y="465" width="1" height="1" fill="#fafafa" />
<rect x="409" y="466" width="1" height="1" fill="#a8a8a8" />
<rect x="413" y="465" width="2" height="2" fill="#d0d0d0" />
<rect x="413" y="465" width="1" height="1" fill="#fafafa" />
<rect x="414" y="466" width="1" height="1" fill="#a8a8a8" />
<rect x="418" y="465" width="2" height="2" fill="#d0d0d0" />
<rect x="418" y="465" width="1" height="1" fill="#fafafa" />
<rect x="419" y="466" width="1" height="1" fill="#a8a8a8" />
<rect x="423" y="465" width="2" height="2" fill="#d0d0d0" />
<rect x="423" y="465" width="1" height="1" fill="#fafafa" />
<rect x="424" y="466" width="1" height="1" fill="#a8a8a8" />
<rect x="428" y="465" width="2" height="2" fill="#d0d0d0" />
<rect x="428" y="465" width="1" height="1" fill="#fafafa" />
<rect x="429" y="466" width="1" height="1" fill="#a8a8a8" />
<rect x="433" y="465" width="2" height="2" fill="#d0d0d0" />
<rect x="433" y="465" width="1" height="1" fill="#fafafa" />
<rect x="434" y="466" width="1" height="1" fill="#a8a8a8" />
<rect x="438" y="465" width="2" height="2" fill="#d0d0d0" />
<rect x="438" y="465" width="1" height="1" fill="#fafafa" />
<rect x="439" y="466" width="1" height="1" fill="#a8a8a8" />
<rect x="443" y="465" width="2" height="2" fill="#d0d0d0" />
<rect x="443" y="465" width="1" height="1" fill="#fafafa" />
<rect x="444" y="466" width="1" height="1" fill="#a8a8a8" />
<rect x="448" y="465" width="2" height="2" fill="#d0d0d0" />
<rect x="448" y="465" width="1" height="1" fill="#fafafa" />
<rect x="449" y="466" width="1" height="1" fill="#a8a8a8" />
<rect x="453" y="465" width="2" height="2" fill="#d0d0d0" />
<rect x="453" y="465" width="1" height="1" fill="#fafafa" />
<rect x="454" y="466" width="1" height="1" fill="#a8a8a8" />
<rect x="458" y="465" width="2" height="2" fill="#d0d0d0" />
<rect x="458" y="465" width="1" height="1" fill="#fafafa" />
<rect x="459" y="466" width="1" height="1" fill="#a8a8a8" />
<rect x="463" y="465" width="2" height="2" fill="#d0d0d0" />
<rect x="463" y="465" width="1" height="1" fill="#fafafa" />
<rect x="464" y="466" width="1" height="1" fill="#a8a8a8" />
<rect x="468" y="465" width="2" height="2" fill="#d0d0d0" />
<rect x="468" y="465" width="1" height="1" fill="#fafafa" />
<rect x="469" y="466" width="1" height="1" fill="#a8a8a8" />
<rect x="473" y="465" width="2" height="2" fill="#d0d0d0" />
<rect x="473" y="465" width="1" height="1" fill="#fafafa" />
<rect x="474" y="466" width="1" height="1" fill="#a8a8a8" />
<rect x="478" y="465" width="2" height="2" fill="#d0d0d0" />
<rect x="478" y="465" width="1" height="1" fill="#fafafa" />
<rect x="479" y="466" width="1" height="1" fill="#a8a8a8" />
<rect x="483" y="465" width="2" height="2" fill="#d0d0d0" />
<rect x="483" y="465" width="1" height="1" fill="#fafafa" />
<rect x="484" y="466" width="1" height="1" fill="#a8a8a8" />
<rect x="488" y="465" width="2" height="2" fill="#d0d0d0" />
<rect x="488" y="465" width="1" height="1" fill="#fafafa" />
<rect x="489" y="466" width="1" height="1" fill="#a8a8a8" />
<rect x="493" y="465" width="2" height="2" fill="#d0d0d0" />
<rect x="493" y="465" width="1" height="1" fill="#fafafa" />
<rect x="494" y="466" width="1" height="1" fill="#a8a8a8" />
<rect x="498" y="465" width="2" height="2" fill="#d0d0d0" />
<rect x="498" y="465" width="1" height="1" fill="#fafafa" />
<rect x="499" y="466" width="1" height="1" fill="#a8a8a8" />
<rect x="503" y="465" width="2" height="2" fill="#d0d0d0" />
<rect x="503" y="465" width="1" height="1" fill="#fafafa" />
<rect x="504" y="466" width="1" height="1" fill="#a8a8a8" />
<rect x="508" y="465" width="2" height="2" fill="#d0d0d0" />
<rect x="508" y="465" width="1" height="1" fill="#fafafa" />
<rect x="509" y="466" width="1" height="1" fill="#a8a8a8" />
<rect x="513" y="465" width="2" height="2" fill="#d0d0d0" />
<rect x="513" y="465" width="1" height="1" fill="#fafafa" />
<rect x="514" y="466" width="1" height="1" fill="#a8a8a8" />
<rect x="518" y="465" width="2" height="2" fill="#d0d0d0" />
<rect x="518" y="465" width="1" height="1" fill="#fafafa" />
<rect x="519" y="466" width="1" height="1" fill="#a8a8a8" />
<rect x="523" y="465" width="2" height="2" fill="#d0d0d0" />
<rect x="523" y="465" width="1" height="1" fill="#fafafa" />
<rect x="524" y="466" width="1" height="1" fill="#a8a8a8" />
<rect x="528" y="465" width="2" height="2" fill="#d0d0d0" />
<rect x="528" y="465" width="1" height="1" fill="#fafafa" />
<rect x="529" y="466" width="1" height="1" fill="#a8a8a8" />
<rect x="533" y="465" width="2" height="2" fill="#d0d0d0" />
<rect x="533" y="465" width="1" height="1" fill="#fafafa" />
<rect x="534" y="466" width="1" height="1" fill="#a8a8a8" />
<rect x="538" y="465" width="2" height="2" fill="#d0d0d0" />
<rect x="538" y="465" width="1" height="1" fill="#fafafa" />
<rect x="539" y="466" width="1" height="1" fill="#a8a8a8" />
<rect x="543" y="465" width="2" height="2" fill="#d0d0d0" />
<rect x="543" y="465" width="1" height="1" fill="#fafafa" />
<rect x="544" y="466" width="1" height="1" fill="#a8a8a8" />
<rect x="548" y="465" width="2" height="2" fill="#d0d0d0" />
<rect x="548" y="465" width="1" height="1" fill="#fafafa" />
<rect x="549" y="466" width="1" height="1" fill="#a8a8a8" />
<rect x="553" y="465" width="2" height="2" fill="#d0d0d0" />
<rect x="553" y="465" width="1" height="1" fill="#fafafa" />
<rect x="554" y="466" width="1" height="1" fill="#a8a8a8" />
<rect x="558" y="465" width="2" height="2" fill="#d0d0d0" />
<rect x="558" y="465" width="1" height="1" fill="#fafafa" />
<rect x="559" y="466" width="1" height="1" fill="#a8a8a8" />
<rect x="563" y="465" width="2" height="2" fill="#d0d0d0" />
<rect x="563" y="465" width="1" height="1" fill="#fafafa" />
<rect x="564" y="466" width="1" height="1" fill="#a8a8a8" />
<rect x="568" y="465" width="2" height="2" fill="#d0d0d0" />
<rect x="568" y="465" width="1" height="1" fill="#fafafa" />
<rect x="569" y="466" width="1" height="1" fill="#a8a8a8" />
<rect x="573" y="465" width="2" height="2" fill="#d0d0d0" />
<rect x="573" y="465" width="1" height="1" fill="#fafafa" />
<rect x="574" y="466" width="1" height="1" fill="#a8a8a8" />
<rect x="578" y="465" width="2" height="2" fill="#d0d0d0" />
<rect x="578" y="465" width="1" height="1" fill="#fafafa" />
<rect x="579" y="466" width="1" height="1" fill="#a8a8a8" />
<rect x="4" y="469" width="879" height="1" fill="#a0a0a0" />
<rect x="4" y="470" width="1" height="18" fill="#fff" />
<rect x="4" y="487" width="879" height="1" fill="#a0a0a0" />
<rect x="4" y="470" width="1" height="18" fill="#c0c0c0" />
<g transform="translate(580,381)"><path d="M246,96.5 H254" stroke="#000" stroke-width="1"/><path d="M245,96.5 L248.5,93 V100 Z M255,96.5 L251.5,93 V100 Z" fill="#000"/><rect x="260.5" y="92.5" width="8" height="8" fill="none" stroke="#000" shape-rendering="crispEdges"/><rect x="260" y="92" width="9" height="2" fill="#000"/><rect x="276.5" y="95.5" width="5" height="5" fill="none" stroke="#000" shape-rendering="crispEdges"/><rect x="276" y="95" width="6" height="2" fill="#000"/><path d="M278.5,95 V92.5 H284.5 V97.5 H282" fill="none" stroke="#000" shape-rendering="crispEdges"/><rect x="278" y="92" width="7" height="2" fill="#000"/><path d="M291.5,93.5 L298.5,100.5 M298.5,93.5 L291.5,100.5" stroke="#000" stroke-width="1.7"/></g>
<rect x="4" y="490" width="879" height="1" fill="#828790" />
<rect x="4" y="490" width="1" height="88" fill="#828790" />
<rect x="4" y="577" width="879" height="1" fill="#828790" />
<rect x="5" y="491" width="877" height="86" fill="#fff" />
<rect x="7" y="493" width="19" height="67" fill="#f0f0f0" />
<rect x="866" y="491" width="16" height="70" fill="#f0f0f0" />
<path d="M869.5,502 l4,-4 l4,4" fill="none" stroke="#c0c0c0" stroke-width="1.8"/>
<path d="M869.5,552 l4,4 l4,-4" fill="none" stroke="#c0c0c0" stroke-width="1.8"/>
<rect x="5" y="561" width="877" height="16" fill="#f0f0f0" />
<rect x="22" y="561" width="75" height="15" fill="#c8c8c8" />
<rect x="54" y="564" width="10" height="9" fill="#f0f0f0" />
<path d="M17,565.5 l-4.5,3.5 l4.5,3.5" fill="none" stroke="#505050" stroke-width="2"/>
<path d="M854,565.5 l4.5,3.5 l-4.5,3.5" fill="none" stroke="#505050" stroke-width="2"/>
<rect x="7" y="578" width="80" height="22" fill="#eeeeee" />
<rect x="7" y="578" width="80" height="1" fill="#dadada" />
<rect x="7" y="599" width="80" height="1" fill="#dadada" />
<rect x="7" y="578" width="1" height="22" fill="#dadada" />
<rect x="86" y="578" width="1" height="22" fill="#dadada" />
<g transform="translate(12,581)"><rect x="0.5" y="0.5" width="11" height="14" fill="url(#gdoc)" stroke="#2c5eb8"/><path d="M3,3.5 h6 M3,5.5 h6 M3,7.5 h6 M3,9.5 h6 M3,11.5 h6" stroke="#2c5eb8"/></g>
<rect x="86" y="578" width="81" height="24" fill="#fff" />
<rect x="86" y="578" width="81" height="1" fill="#e0e0e0" />
<rect x="86" y="601" width="81" height="1" fill="#e0e0e0" />
<rect x="86" y="578" width="1" height="24" fill="#e0e0e0" />
<rect x="166" y="578" width="1" height="24" fill="#e0e0e0" />
<circle cx="102" cy="589.5" r="7.5" fill="#e02020" stroke="#b01010"/><path d="M99,586.5 l6,6 M105,586.5 l-6,6" stroke="#fff" stroke-width="1.8"/>
<rect x="167" y="578" width="90" height="22" fill="#eeeeee" />
<rect x="167" y="578" width="90" height="1" fill="#dadada" />
<rect x="167" y="599" width="90" height="1" fill="#dadada" />
<rect x="167" y="578" width="1" height="22" fill="#dadada" />
<rect x="256" y="578" width="1" height="22" fill="#dadada" />
<path d="M179.5,582 L188,597 H171z" fill="#ffd820" stroke="#c09000"/><rect x="178.8" y="586" width="1.6" height="6" fill="#000"/><rect x="178.8" y="593" width="1.6" height="2" fill="#000"/>
<rect x="256" y="578" width="1" height="21" fill="#e0e0e0" />
<rect x="256" y="578" width="167" height="22" fill="#eeeeee" />
<rect x="256" y="578" width="167" height="1" fill="#dadada" />
<rect x="256" y="599" width="167" height="1" fill="#dadada" />
<rect x="256" y="578" width="1" height="22" fill="#dadada" />
<rect x="422" y="578" width="1" height="22" fill="#dadada" />
<g transform="translate(262,580)"><path d="M0.5,1.5 h5 l1,1.5 h8 v11 h-14z" fill="#f0d050" stroke="#d0a828"/><path d="M0.5,5.5 h15 v9 h-15z" fill="#fce060"/></g>
<g transform="translate(267,585) scale(0.7)"><rect x="2" y="0" width="4.5" height="7" rx="1" fill="#3a3a3a"/><rect x="9.5" y="0" width="4.5" height="7" rx="1" fill="#3a3a3a"/><rect x="5" y="4" width="6" height="4" fill="#2a2a2a"/><path d="M0,13 Q0,5 2.5,4 H7 L7.5,14 Z M16,13 Q16,5 13.5,4 H9 L8.5,14 Z" fill="#303030"/><path d="M1.5,11 Q1.5,7 3,6 M14.5,11 Q14.5,7 13,6" stroke="#c0c0c0" stroke-width="1.2" fill="none"/><rect x="3" y="0.5" width="2" height="1.5" fill="#909090"/><rect x="10.5" y="0.5" width="2" height="1.5" fill="#909090"/></g>
<rect x="810" y="603" width="1" height="20" fill="#d8d8d8" />
<rect x="864" y="603" width="1" height="20" fill="#d8d8d8" />
<rect x="878" y="615" width="2" height="2" fill="#b0b0b0" />
<rect x="875" y="618" width="2" height="2" fill="#b0b0b0" />
<rect x="878" y="618" width="2" height="2" fill="#b0b0b0" />
<rect x="872" y="621" width="2" height="2" fill="#b0b0b0" />
<rect x="875" y="621" width="2" height="2" fill="#b0b0b0" />
<rect x="878" y="621" width="2" height="2" fill="#b0b0b0" />
</svg>
<div class="t ui" style="left:34px;top:12px;">ISE Project Navigator (P.20131013) - D:\iCore4TX\fpga\iCore4tx_fpga_16_decoder\chipscope\chipscope.xise - [chipscop...</div>
<div class="t ui" style="left:28px;top:39px;">File</div>
<div class="t ui" style="left:63px;top:39px;">Edit</div>
<div class="t ui" style="left:101px;top:39px;">View</div>
<div class="t ui" style="left:144px;top:39px;">Project</div>
<div class="t ui" style="left:200px;top:39px;">Source</div>
<div class="t ui" style="left:256px;top:39px;">Process</div>
<div class="t ui" style="left:317px;top:39px;">Tools</div>
<div class="t ui" style="left:363px;top:39px;">Window</div>
<div class="t ui" style="left:426px;top:39px;">Layout</div>
<div class="t ui" style="left:481px;top:39px;">Help</div>
<div class="t ss" style="left:7px;top:90px;"><i style="transform:scaleX(0.64)">D</i><i>e</i><i>s</i><i>i</i><i style="transform:scaleX(0.92)">g</i><i style="transform:scaleX(0.92)">n</i></div>
<div class="t ss" style="left:34px;top:111px;"><i style="transform:scaleX(0.64)">V</i><i>i</i><i>e</i><i style="transform:scaleX(0.64)">w</i><i>:</i></div>
<div class="t ss" style="left:110px;top:111px;"><i>I</i><i style="transform:scaleX(0.59)">m</i><i style="transform:scaleX(0.92)">p</i><i>l</i><i>e</i><i style="transform:scaleX(0.59)">m</i><i>e</i><i style="transform:scaleX(0.92)">n</i><i>t</i><i>a</i><i>t</i><i>i</i><i style="transform:scaleX(0.92)">o</i><i style="transform:scaleX(0.92)">n</i></div>
<div class="t ss" style="left:239px;top:111px;"><i style="transform:scaleX(0.83)">S</i><i>i</i><i style="transform:scaleX(0.59)">m</i><i style="transform:scaleX(0.92)">u</i><i>l</i><i>a</i><i>t</i><i>i</i><i style="transform:scaleX(0.92)">o</i><i style="transform:scaleX(0.92)">n</i></div>
<div class="t ui" style="left:37px;top:135px;">Hierarchy</div>
<div class="t ui" style="left:77px;top:158px;">chipscope</div>
<div class="t ui" style="left:77px;top:176px;">xc6slx16-2ftg256</div>
<div class="t ui" style="left:113px;top:194px;">chipscope (chipscope.v)</div>
<div class="t ui" style="left:117px;top:212px;color:#fff">chipscope.cdc</div>
<div class="t ui" style="left:117px;top:230px;">chipscope.ucf</div>
<div class="t ss" style="left:60px;top:354px;"><i style="transform:scaleX(0.64)">N</i><i style="transform:scaleX(0.92)">o</i><i style="width:6px"></i><i style="transform:scaleX(0.83)">P</i><i>r</i><i style="transform:scaleX(0.92)">o</i><i>c</i><i>e</i><i>s</i><i>s</i><i>e</i><i>s</i><i style="width:6px"></i><i style="transform:scaleX(0.69)">R</i><i style="transform:scaleX(0.92)">u</i><i style="transform:scaleX(0.92)">n</i><i style="transform:scaleX(0.92)">n</i><i>i</i><i style="transform:scaleX(0.92)">n</i><i style="transform:scaleX(0.92)">g</i></div>
<div class="t ui" style="left:36px;top:383px;">Processes: chipscope.cdc</div>
<div class="t ss" style="left:36px;top:443px;"><i style="transform:scaleX(0.83)">S</i><i>t</i><i>a</i><i>r</i><i>t</i></div>
<div class="t ss" style="left:107px;top:444px;"><i style="transform:scaleX(0.64)">D</i><i>e</i><i>s</i><i>i</i><i style="transform:scaleX(0.92)">g</i><i style="transform:scaleX(0.92)">n</i></div>
<div class="t ss" style="left:186px;top:443px;"><i style="transform:scaleX(0.83)">F</i><i>i</i><i>l</i><i>e</i><i>s</i></div>
<div class="t ss" style="left:252px;top:443px;"><i style="transform:scaleX(0.76)">L</i><i>i</i><i style="transform:scaleX(0.92)">b</i></div>
<div class="t ss" style="left:358px;top:444px;"><i>c</i><i style="transform:scaleX(0.92)">h</i><i>i</i><i style="transform:scaleX(0.92)">p</i><i>s</i><i>c</i><i style="transform:scaleX(0.92)">o</i><i style="transform:scaleX(0.92)">p</i><i>e</i><i>.</i><i style="transform:scaleX(0.92)">v</i></div>
<div class="t ss" style="left:509px;top:443px;"><i style="transform:scaleX(0.64)">D</i><i>e</i><i>s</i><i>i</i><i style="transform:scaleX(0.92)">g</i><i style="transform:scaleX(0.92)">n</i><i style="width:6px"></i><i style="transform:scaleX(0.83)">S</i><i style="transform:scaleX(0.92)">u</i><i style="transform:scaleX(0.59)">m</i><i style="transform:scaleX(0.59)">m</i><i>a</i><i>r</i><i style="transform:scaleX(0.92)">y</i><i style="width:6px"></i><i>(</i><i style="transform:scaleX(0.92)">o</i><i style="transform:scaleX(0.92)">u</i><i>t</i><i style="width:6px"></i><i style="transform:scaleX(0.92)">o</i><i>f</i><i style="width:6px"></i><i style="transform:scaleX(0.92)">d</i><i>a</i><i>t</i><i>e</i><i>)</i></div>
<div class="t ss" style="left:7px;top:471px;"><i style="transform:scaleX(0.76)">E</i><i>r</i><i>r</i><i style="transform:scaleX(0.92)">o</i><i>r</i><i>s</i></div>
<div class="t ss" style="left:36px;top:582px;"><i style="transform:scaleX(0.69)">C</i><i style="transform:scaleX(0.92)">o</i><i style="transform:scaleX(0.92)">n</i><i>s</i><i style="transform:scaleX(0.92)">o</i><i>l</i><i>e</i></div>
<div class="t ss" style="left:119px;top:583px;"><i style="transform:scaleX(0.76)">E</i><i>r</i><i>r</i><i style="transform:scaleX(0.92)">o</i><i>r</i><i>s</i></div>
<div class="t ss" style="left:197px;top:582px;"><i style="transform:scaleX(0.49)">W</i><i>a</i><i>r</i><i style="transform:scaleX(0.92)">n</i><i>i</i><i style="transform:scaleX(0.92)">n</i><i style="transform:scaleX(0.92)">g</i><i>s</i></div>
<div class="t ss" style="left:287px;top:582px;"><i style="transform:scaleX(0.83)">F</i><i>i</i><i style="transform:scaleX(0.92)">n</i><i style="transform:scaleX(0.92)">d</i><i style="width:6px"></i><i>i</i><i style="transform:scaleX(0.92)">n</i><i style="width:6px"></i><i style="transform:scaleX(0.83)">F</i><i>i</i><i>l</i><i>e</i><i>s</i><i style="width:6px"></i><i style="transform:scaleX(0.69)">R</i><i>e</i><i>s</i><i style="transform:scaleX(0.92)">u</i><i>l</i><i>t</i><i>s</i></div>
<div class="t ui" style="left:732px;top:606px;">Ln 30 Col 20</div>
<div class="t ui" style="left:818px;top:606px;">Verilog</div>
<div class="t code" style="left:341px;top:93.5px;width:34px;text-align:right">15
16
17
18
19
20
21
22
23
24
25
26
27
28
29
30
31
32
33
34</div>
<div class="t code" style="left:392px;top:93.5px"><span class="cm">//</span>
<span class="cm">// Revision:</span>
<span class="cm">// Revision 0.01 - File Created</span>
<span class="cm">// Additional Comments:</span>

<span class="kw">module</span> chipscope(
    <span class="kw">input</span>   clk_25M,
    <span class="kw">output</span>  led
    );
<span class="kw">reg</span>   [3:0] cnt=4'd0;

<span class="kw">always</span>@(<span class="kw">posedge</span> clk_25M)
   <span class="kw">if</span>(cnt&lt;=15)
      cnt&lt;=cnt+1'd1;
      <span class="kw">else</span>
         cnt&lt;=4'd0;

<span class="kw">assign</span>   led=cnt[3];
<span class="kw">endmodule</span>
</div>
</body></html>
